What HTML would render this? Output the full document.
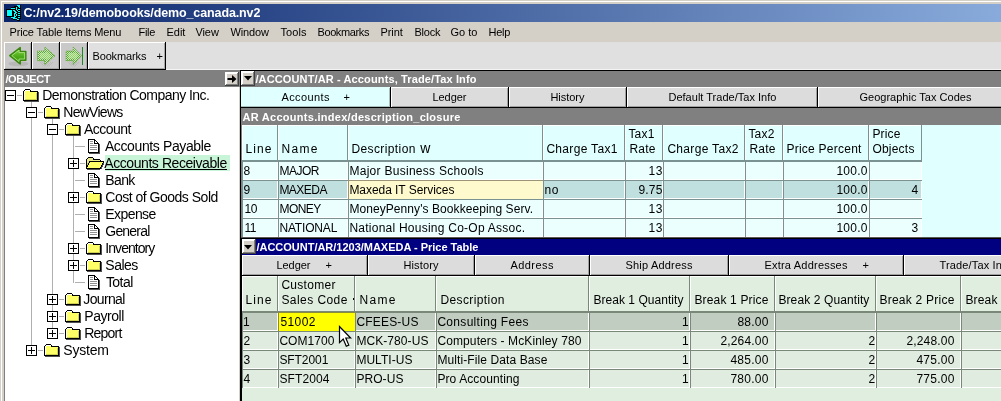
<!DOCTYPE html>
<html lang="en"><head><meta charset="utf-8"><title>C:/nv2.19/demobooks/demo_canada.nv2</title>
<style>
html,body{margin:0;padding:0;}
body{width:1001px;height:401px;overflow:hidden;background:#d4d0c8;}
#app{position:relative;width:1001px;height:401px;overflow:hidden;font-family:'Liberation Sans', sans-serif;color:#000;}
#app div,#app svg,#app span{position:absolute;}
#app span{white-space:pre;line-height:1;}
#app svg{overflow:visible;}
#txt{left:0;top:0;width:1001px;height:401px;will-change:transform;}
</style></head>
<body><div id="app">
<div style="left:0px;top:0px;width:1001px;height:401px;background:#d4d0c8;"></div>
<div style="left:1px;top:1px;width:1000px;height:1px;background:#ffffff;"></div>
<div style="left:1px;top:1px;width:1px;height:400px;background:#ffffff;"></div>
<div style="left:4px;top:4px;width:997px;height:18px;background:linear-gradient(90deg,#0a246a 0px,#89abdb 997px);"></div>
<div style="left:4px;top:42px;width:997px;height:27px;background:#e0e0e0;"></div>
<div style="left:166px;top:69px;width:835px;height:1px;background:#f4f4f4;"></div>
<div style="left:4px;top:42px;width:28px;height:28px;background:#c9c9c9;"></div>
<div style="left:4px;top:42px;width:27px;height:1px;background:#ffffff;"></div>
<div style="left:4px;top:42px;width:1px;height:27px;background:#ffffff;"></div>
<div style="left:30px;top:43px;width:1px;height:26px;background:#a8a8a8;"></div>
<div style="left:5px;top:68px;width:26px;height:1px;background:#a8a8a8;"></div>
<div style="left:31px;top:42px;width:1px;height:28px;background:#000000;"></div>
<div style="left:4px;top:69px;width:28px;height:1px;background:#000000;"></div>
<div style="left:32px;top:42px;width:28px;height:28px;background:#c9c9c9;"></div>
<div style="left:32px;top:42px;width:27px;height:1px;background:#ffffff;"></div>
<div style="left:32px;top:42px;width:1px;height:27px;background:#ffffff;"></div>
<div style="left:58px;top:43px;width:1px;height:26px;background:#a8a8a8;"></div>
<div style="left:33px;top:68px;width:26px;height:1px;background:#a8a8a8;"></div>
<div style="left:59px;top:42px;width:1px;height:28px;background:#000000;"></div>
<div style="left:32px;top:69px;width:28px;height:1px;background:#000000;"></div>
<div style="left:60px;top:42px;width:28px;height:28px;background:#c9c9c9;"></div>
<div style="left:60px;top:42px;width:27px;height:1px;background:#ffffff;"></div>
<div style="left:60px;top:42px;width:1px;height:27px;background:#ffffff;"></div>
<div style="left:86px;top:43px;width:1px;height:26px;background:#a8a8a8;"></div>
<div style="left:61px;top:68px;width:26px;height:1px;background:#a8a8a8;"></div>
<div style="left:87px;top:42px;width:1px;height:28px;background:#000000;"></div>
<div style="left:60px;top:69px;width:28px;height:1px;background:#000000;"></div>
<div style="left:88px;top:42px;width:78px;height:28px;background:#e0e0e0;"></div>
<div style="left:88px;top:42px;width:77px;height:1px;background:#ffffff;"></div>
<div style="left:88px;top:42px;width:1px;height:27px;background:#ffffff;"></div>
<div style="left:164px;top:43px;width:1px;height:26px;background:#a8a8a8;"></div>
<div style="left:89px;top:68px;width:76px;height:1px;background:#a8a8a8;"></div>
<div style="left:165px;top:42px;width:1px;height:28px;background:#000000;"></div>
<div style="left:88px;top:69px;width:78px;height:1px;background:#000000;"></div>
<svg style="left:4px;top:42px" width="28" height="28" viewBox="0 0 28 28">
<defs><linearGradient id="ga" x1="0" y1="0" x2="0" y2="1"><stop offset="0" stop-color="#8ad84a"/><stop offset=".55" stop-color="#4caa18"/><stop offset="1" stop-color="#3c960e"/></linearGradient></defs>
<ellipse cx="14.5" cy="21.8" rx="10" ry="2.4" fill="#909090" opacity=".3"/>
<path d="M5.8 13.6 L16.2 5.6 V9.4 H21.8 V18.2 H16.2 V22 Z" fill="url(#ga)" stroke="#3a860f" stroke-width="1.5" stroke-linejoin="round"/>
<path d="M7.8 13.6 L15 8.1 V10.6 H20.6 V17 H15 V19.5 Z" fill="none" stroke="#b4ea8e" stroke-width="0.9" stroke-linejoin="round" opacity=".85"/>
</svg>
<svg style="left:32px;top:42px" width="28" height="28" viewBox="0 0 28 28"><defs><pattern id="p32" width="2" height="2" patternUnits="userSpaceOnUse"><rect width="2" height="2" fill="#cfe6c2"/><rect width="1" height="1" fill="#5aa632"/><rect x="1" y="1" width="1" height="1" fill="#5aa632"/></pattern><pattern id="q32" width="2" height="2" patternUnits="userSpaceOnUse"><rect width="1" height="1" fill="#a0a0a0"/><rect x="1" y="1" width="1" height="1" fill="#a0a0a0"/></pattern></defs><path d="M7.5 20 H22 L17 24.5 H10.5 Z" fill="url(#q32)" opacity=".4"/><path d="M23 13.8 L12.7 5 V9 H5.5 V18.7 H12.7 V22.7 Z" fill="url(#p32)" stroke="#62aa3a" stroke-width="1" stroke-dasharray="1 1"/><path d="M19.5 13.8 L14.2 8.6 V11 H8.0 V16.6 H14.2 V19 Z" fill="#c4f0a2" opacity=".55"/></svg>
<svg style="left:60px;top:42px" width="28" height="28" viewBox="0 0 28 28"><defs><pattern id="p60" width="2" height="2" patternUnits="userSpaceOnUse"><rect width="2" height="2" fill="#cfe6c2"/><rect width="1" height="1" fill="#5aa632"/><rect x="1" y="1" width="1" height="1" fill="#5aa632"/></pattern><pattern id="q60" width="2" height="2" patternUnits="userSpaceOnUse"><rect width="1" height="1" fill="#a0a0a0"/><rect x="1" y="1" width="1" height="1" fill="#a0a0a0"/></pattern></defs><path d="M8 20 H20.5 L15.5 24.5 H11 Z" fill="url(#q60)" opacity=".4"/><path d="M21.5 13.8 L13.2 5 V9 H6 V18.7 H13.2 V22.7 Z" fill="url(#p60)" stroke="#62aa3a" stroke-width="1" stroke-dasharray="1 1"/><path d="M18.0 13.8 L14.7 8.6 V11 H8.5 V16.6 H14.7 V19 Z" fill="#c4f0a2" opacity=".55"/><rect x="22" y="5" width="1" height="18" fill="#1c8a1c" shape-rendering="crispEdges"/></svg>
<div style="left:4px;top:70px;width:236px;height:17px;background:#808080;"></div>
<div style="left:4px;top:87px;width:235px;height:314px;background:#ffffff;"></div>
<div style="left:4px;top:87px;width:1px;height:314px;background:#808080;"></div>
<div style="left:225px;top:72px;width:14px;height:14px;background:#d4d0c8;"></div>
<div style="left:225px;top:72px;width:13px;height:2px;background:#ffffff;"></div>
<div style="left:225px;top:72px;width:2px;height:13px;background:#ffffff;"></div>
<div style="left:237px;top:73px;width:1px;height:12px;background:#808080;"></div>
<div style="left:226px;top:84px;width:12px;height:1px;background:#808080;"></div>
<div style="left:238px;top:72px;width:1px;height:14px;background:#404040;"></div>
<div style="left:225px;top:85px;width:14px;height:1px;background:#404040;"></div>
<svg style="left:227px;top:74px" width="10" height="10" viewBox="0 0 10 10"><path d="M0.5 4 H5 V1 L9.5 5 L5 9 V6 H0.5 Z" fill="#000"/></svg>
<div style="left:31px;top:102px;width:1px;height:249px;background:#b0b0b0;"></div>
<div style="left:52px;top:119px;width:1px;height:215px;background:#b0b0b0;"></div>
<div style="left:73px;top:136px;width:1px;height:147px;background:#b0b0b0;"></div>
<div style="left:17px;top:95px;width:5px;height:1px;background:#b0b0b0;"></div>
<div style="left:5px;top:90px;width:11px;height:11px;background:#ffffff;border:1px solid #000;box-sizing:border-box;"></div>
<div style="left:7px;top:95px;width:7px;height:1px;background:#000;"></div>
<svg style="left:23px;top:89px" width="16" height="13" viewBox="0 0 16 13" shape-rendering="crispEdges"><rect x="2" y="0" width="5" height="1" fill="#000000"/><rect x="1" y="1" width="1" height="1" fill="#000000"/><rect x="2" y="1" width="5" height="1" fill="#ffffff"/><rect x="7" y="1" width="1" height="1" fill="#000000"/><rect x="0" y="2" width="1" height="1" fill="#000000"/><rect x="1" y="2" width="1" height="1" fill="#ffffff"/><rect x="2" y="2" width="5" height="1" fill="#ffff66"/><rect x="7" y="2" width="8" height="1" fill="#000000"/><rect x="0" y="3" width="1" height="1" fill="#000000"/><rect x="1" y="3" width="1" height="1" fill="#ffffff"/><rect x="2" y="3" width="12" height="1" fill="#ffff66"/><rect x="14" y="3" width="1" height="1" fill="#000000"/><rect x="15" y="3" width="1" height="1" fill="#505050"/><rect x="0" y="4" width="1" height="1" fill="#000000"/><rect x="1" y="4" width="1" height="1" fill="#ffffff"/><rect x="2" y="4" width="11" height="1" fill="#ffff66"/><rect x="13" y="4" width="1" height="1" fill="#d0d050"/><rect x="14" y="4" width="1" height="1" fill="#000000"/><rect x="15" y="4" width="1" height="1" fill="#505050"/><rect x="0" y="5" width="1" height="1" fill="#000000"/><rect x="1" y="5" width="1" height="1" fill="#ffffff"/><rect x="2" y="5" width="11" height="1" fill="#ffff66"/><rect x="13" y="5" width="1" height="1" fill="#d0d050"/><rect x="14" y="5" width="1" height="1" fill="#000000"/><rect x="15" y="5" width="1" height="1" fill="#505050"/><rect x="0" y="6" width="1" height="1" fill="#000000"/><rect x="1" y="6" width="1" height="1" fill="#ffffff"/><rect x="2" y="6" width="11" height="1" fill="#ffff66"/><rect x="13" y="6" width="1" height="1" fill="#d0d050"/><rect x="14" y="6" width="1" height="1" fill="#000000"/><rect x="15" y="6" width="1" height="1" fill="#505050"/><rect x="0" y="7" width="1" height="1" fill="#000000"/><rect x="1" y="7" width="1" height="1" fill="#ffffff"/><rect x="2" y="7" width="11" height="1" fill="#ffff66"/><rect x="13" y="7" width="1" height="1" fill="#d0d050"/><rect x="14" y="7" width="1" height="1" fill="#000000"/><rect x="15" y="7" width="1" height="1" fill="#505050"/><rect x="0" y="8" width="1" height="1" fill="#000000"/><rect x="1" y="8" width="1" height="1" fill="#ffffff"/><rect x="2" y="8" width="11" height="1" fill="#ffff66"/><rect x="13" y="8" width="1" height="1" fill="#d0d050"/><rect x="14" y="8" width="1" height="1" fill="#000000"/><rect x="15" y="8" width="1" height="1" fill="#505050"/><rect x="0" y="9" width="1" height="1" fill="#000000"/><rect x="1" y="9" width="1" height="1" fill="#ffffff"/><rect x="2" y="9" width="11" height="1" fill="#ffff66"/><rect x="13" y="9" width="1" height="1" fill="#d0d050"/><rect x="14" y="9" width="1" height="1" fill="#000000"/><rect x="15" y="9" width="1" height="1" fill="#505050"/><rect x="0" y="10" width="1" height="1" fill="#000000"/><rect x="1" y="10" width="1" height="1" fill="#ffffff"/><rect x="2" y="10" width="12" height="1" fill="#d0d050"/><rect x="14" y="10" width="1" height="1" fill="#000000"/><rect x="15" y="10" width="1" height="1" fill="#505050"/><rect x="0" y="11" width="15" height="1" fill="#000000"/><rect x="15" y="11" width="1" height="1" fill="#505050"/><rect x="1" y="12" width="15" height="1" fill="#505050"/></svg>
<div style="left:38px;top:112px;width:5px;height:1px;background:#b0b0b0;"></div>
<div style="left:26px;top:107px;width:11px;height:11px;background:#ffffff;border:1px solid #000;box-sizing:border-box;"></div>
<div style="left:28px;top:112px;width:7px;height:1px;background:#000;"></div>
<svg style="left:44px;top:106px" width="16" height="13" viewBox="0 0 16 13" shape-rendering="crispEdges"><rect x="2" y="0" width="5" height="1" fill="#000000"/><rect x="1" y="1" width="1" height="1" fill="#000000"/><rect x="2" y="1" width="5" height="1" fill="#ffffff"/><rect x="7" y="1" width="1" height="1" fill="#000000"/><rect x="0" y="2" width="1" height="1" fill="#000000"/><rect x="1" y="2" width="1" height="1" fill="#ffffff"/><rect x="2" y="2" width="5" height="1" fill="#ffff66"/><rect x="7" y="2" width="8" height="1" fill="#000000"/><rect x="0" y="3" width="1" height="1" fill="#000000"/><rect x="1" y="3" width="1" height="1" fill="#ffffff"/><rect x="2" y="3" width="12" height="1" fill="#ffff66"/><rect x="14" y="3" width="1" height="1" fill="#000000"/><rect x="15" y="3" width="1" height="1" fill="#505050"/><rect x="0" y="4" width="1" height="1" fill="#000000"/><rect x="1" y="4" width="1" height="1" fill="#ffffff"/><rect x="2" y="4" width="11" height="1" fill="#ffff66"/><rect x="13" y="4" width="1" height="1" fill="#d0d050"/><rect x="14" y="4" width="1" height="1" fill="#000000"/><rect x="15" y="4" width="1" height="1" fill="#505050"/><rect x="0" y="5" width="1" height="1" fill="#000000"/><rect x="1" y="5" width="1" height="1" fill="#ffffff"/><rect x="2" y="5" width="11" height="1" fill="#ffff66"/><rect x="13" y="5" width="1" height="1" fill="#d0d050"/><rect x="14" y="5" width="1" height="1" fill="#000000"/><rect x="15" y="5" width="1" height="1" fill="#505050"/><rect x="0" y="6" width="1" height="1" fill="#000000"/><rect x="1" y="6" width="1" height="1" fill="#ffffff"/><rect x="2" y="6" width="11" height="1" fill="#ffff66"/><rect x="13" y="6" width="1" height="1" fill="#d0d050"/><rect x="14" y="6" width="1" height="1" fill="#000000"/><rect x="15" y="6" width="1" height="1" fill="#505050"/><rect x="0" y="7" width="1" height="1" fill="#000000"/><rect x="1" y="7" width="1" height="1" fill="#ffffff"/><rect x="2" y="7" width="11" height="1" fill="#ffff66"/><rect x="13" y="7" width="1" height="1" fill="#d0d050"/><rect x="14" y="7" width="1" height="1" fill="#000000"/><rect x="15" y="7" width="1" height="1" fill="#505050"/><rect x="0" y="8" width="1" height="1" fill="#000000"/><rect x="1" y="8" width="1" height="1" fill="#ffffff"/><rect x="2" y="8" width="11" height="1" fill="#ffff66"/><rect x="13" y="8" width="1" height="1" fill="#d0d050"/><rect x="14" y="8" width="1" height="1" fill="#000000"/><rect x="15" y="8" width="1" height="1" fill="#505050"/><rect x="0" y="9" width="1" height="1" fill="#000000"/><rect x="1" y="9" width="1" height="1" fill="#ffffff"/><rect x="2" y="9" width="11" height="1" fill="#ffff66"/><rect x="13" y="9" width="1" height="1" fill="#d0d050"/><rect x="14" y="9" width="1" height="1" fill="#000000"/><rect x="15" y="9" width="1" height="1" fill="#505050"/><rect x="0" y="10" width="1" height="1" fill="#000000"/><rect x="1" y="10" width="1" height="1" fill="#ffffff"/><rect x="2" y="10" width="12" height="1" fill="#d0d050"/><rect x="14" y="10" width="1" height="1" fill="#000000"/><rect x="15" y="10" width="1" height="1" fill="#505050"/><rect x="0" y="11" width="15" height="1" fill="#000000"/><rect x="15" y="11" width="1" height="1" fill="#505050"/><rect x="1" y="12" width="15" height="1" fill="#505050"/></svg>
<div style="left:59px;top:129px;width:5px;height:1px;background:#b0b0b0;"></div>
<div style="left:47px;top:124px;width:11px;height:11px;background:#ffffff;border:1px solid #000;box-sizing:border-box;"></div>
<div style="left:49px;top:129px;width:7px;height:1px;background:#000;"></div>
<svg style="left:65px;top:123px" width="16" height="13" viewBox="0 0 16 13" shape-rendering="crispEdges"><rect x="2" y="0" width="5" height="1" fill="#000000"/><rect x="1" y="1" width="1" height="1" fill="#000000"/><rect x="2" y="1" width="5" height="1" fill="#ffffff"/><rect x="7" y="1" width="1" height="1" fill="#000000"/><rect x="0" y="2" width="1" height="1" fill="#000000"/><rect x="1" y="2" width="1" height="1" fill="#ffffff"/><rect x="2" y="2" width="5" height="1" fill="#ffff66"/><rect x="7" y="2" width="8" height="1" fill="#000000"/><rect x="0" y="3" width="1" height="1" fill="#000000"/><rect x="1" y="3" width="1" height="1" fill="#ffffff"/><rect x="2" y="3" width="12" height="1" fill="#ffff66"/><rect x="14" y="3" width="1" height="1" fill="#000000"/><rect x="15" y="3" width="1" height="1" fill="#505050"/><rect x="0" y="4" width="1" height="1" fill="#000000"/><rect x="1" y="4" width="1" height="1" fill="#ffffff"/><rect x="2" y="4" width="11" height="1" fill="#ffff66"/><rect x="13" y="4" width="1" height="1" fill="#d0d050"/><rect x="14" y="4" width="1" height="1" fill="#000000"/><rect x="15" y="4" width="1" height="1" fill="#505050"/><rect x="0" y="5" width="1" height="1" fill="#000000"/><rect x="1" y="5" width="1" height="1" fill="#ffffff"/><rect x="2" y="5" width="11" height="1" fill="#ffff66"/><rect x="13" y="5" width="1" height="1" fill="#d0d050"/><rect x="14" y="5" width="1" height="1" fill="#000000"/><rect x="15" y="5" width="1" height="1" fill="#505050"/><rect x="0" y="6" width="1" height="1" fill="#000000"/><rect x="1" y="6" width="1" height="1" fill="#ffffff"/><rect x="2" y="6" width="11" height="1" fill="#ffff66"/><rect x="13" y="6" width="1" height="1" fill="#d0d050"/><rect x="14" y="6" width="1" height="1" fill="#000000"/><rect x="15" y="6" width="1" height="1" fill="#505050"/><rect x="0" y="7" width="1" height="1" fill="#000000"/><rect x="1" y="7" width="1" height="1" fill="#ffffff"/><rect x="2" y="7" width="11" height="1" fill="#ffff66"/><rect x="13" y="7" width="1" height="1" fill="#d0d050"/><rect x="14" y="7" width="1" height="1" fill="#000000"/><rect x="15" y="7" width="1" height="1" fill="#505050"/><rect x="0" y="8" width="1" height="1" fill="#000000"/><rect x="1" y="8" width="1" height="1" fill="#ffffff"/><rect x="2" y="8" width="11" height="1" fill="#ffff66"/><rect x="13" y="8" width="1" height="1" fill="#d0d050"/><rect x="14" y="8" width="1" height="1" fill="#000000"/><rect x="15" y="8" width="1" height="1" fill="#505050"/><rect x="0" y="9" width="1" height="1" fill="#000000"/><rect x="1" y="9" width="1" height="1" fill="#ffffff"/><rect x="2" y="9" width="11" height="1" fill="#ffff66"/><rect x="13" y="9" width="1" height="1" fill="#d0d050"/><rect x="14" y="9" width="1" height="1" fill="#000000"/><rect x="15" y="9" width="1" height="1" fill="#505050"/><rect x="0" y="10" width="1" height="1" fill="#000000"/><rect x="1" y="10" width="1" height="1" fill="#ffffff"/><rect x="2" y="10" width="12" height="1" fill="#d0d050"/><rect x="14" y="10" width="1" height="1" fill="#000000"/><rect x="15" y="10" width="1" height="1" fill="#505050"/><rect x="0" y="11" width="15" height="1" fill="#000000"/><rect x="15" y="11" width="1" height="1" fill="#505050"/><rect x="1" y="12" width="15" height="1" fill="#505050"/></svg>
<div style="left:75px;top:146px;width:10px;height:1px;background:#b0b0b0;"></div>
<svg style="left:88px;top:139px" width="12" height="15" viewBox="0 0 12 15" shape-rendering="crispEdges"><rect x="0" y="0" width="7" height="1" fill="#000000"/><rect x="0" y="1" width="1" height="1" fill="#000000"/><rect x="1" y="1" width="5" height="1" fill="#ffffff"/><rect x="6" y="1" width="2" height="1" fill="#000000"/><rect x="0" y="2" width="1" height="1" fill="#000000"/><rect x="1" y="2" width="1" height="1" fill="#ffffff"/><rect x="2" y="2" width="3" height="1" fill="#909090"/><rect x="5" y="2" width="1" height="1" fill="#ffffff"/><rect x="6" y="2" width="1" height="1" fill="#000000"/><rect x="7" y="2" width="1" height="1" fill="#ffffff"/><rect x="8" y="2" width="1" height="1" fill="#000000"/><rect x="0" y="3" width="1" height="1" fill="#000000"/><rect x="1" y="3" width="5" height="1" fill="#ffffff"/><rect x="6" y="3" width="1" height="1" fill="#000000"/><rect x="7" y="3" width="2" height="1" fill="#ffffff"/><rect x="9" y="3" width="1" height="1" fill="#000000"/><rect x="0" y="4" width="1" height="1" fill="#000000"/><rect x="1" y="4" width="1" height="1" fill="#ffffff"/><rect x="2" y="4" width="3" height="1" fill="#909090"/><rect x="5" y="4" width="1" height="1" fill="#ffffff"/><rect x="6" y="4" width="5" height="1" fill="#000000"/><rect x="0" y="5" width="1" height="1" fill="#000000"/><rect x="1" y="5" width="9" height="1" fill="#ffffff"/><rect x="10" y="5" width="1" height="1" fill="#000000"/><rect x="11" y="5" width="1" height="1" fill="#505050"/><rect x="0" y="6" width="1" height="1" fill="#000000"/><rect x="1" y="6" width="1" height="1" fill="#ffffff"/><rect x="2" y="6" width="7" height="1" fill="#909090"/><rect x="9" y="6" width="1" height="1" fill="#ffffff"/><rect x="10" y="6" width="1" height="1" fill="#000000"/><rect x="11" y="6" width="1" height="1" fill="#505050"/><rect x="0" y="7" width="1" height="1" fill="#000000"/><rect x="1" y="7" width="9" height="1" fill="#ffffff"/><rect x="10" y="7" width="1" height="1" fill="#000000"/><rect x="11" y="7" width="1" height="1" fill="#505050"/><rect x="0" y="8" width="1" height="1" fill="#000000"/><rect x="1" y="8" width="1" height="1" fill="#ffffff"/><rect x="2" y="8" width="7" height="1" fill="#909090"/><rect x="9" y="8" width="1" height="1" fill="#ffffff"/><rect x="10" y="8" width="1" height="1" fill="#000000"/><rect x="11" y="8" width="1" height="1" fill="#505050"/><rect x="0" y="9" width="1" height="1" fill="#000000"/><rect x="1" y="9" width="9" height="1" fill="#ffffff"/><rect x="10" y="9" width="1" height="1" fill="#000000"/><rect x="11" y="9" width="1" height="1" fill="#505050"/><rect x="0" y="10" width="1" height="1" fill="#000000"/><rect x="1" y="10" width="1" height="1" fill="#ffffff"/><rect x="2" y="10" width="7" height="1" fill="#909090"/><rect x="9" y="10" width="1" height="1" fill="#ffffff"/><rect x="10" y="10" width="1" height="1" fill="#000000"/><rect x="11" y="10" width="1" height="1" fill="#505050"/><rect x="0" y="11" width="1" height="1" fill="#000000"/><rect x="1" y="11" width="9" height="1" fill="#ffffff"/><rect x="10" y="11" width="1" height="1" fill="#000000"/><rect x="11" y="11" width="1" height="1" fill="#505050"/><rect x="0" y="12" width="1" height="1" fill="#000000"/><rect x="1" y="12" width="9" height="1" fill="#ffffff"/><rect x="10" y="12" width="1" height="1" fill="#000000"/><rect x="11" y="12" width="1" height="1" fill="#505050"/><rect x="0" y="13" width="11" height="1" fill="#000000"/><rect x="11" y="13" width="1" height="1" fill="#505050"/><rect x="1" y="14" width="11" height="1" fill="#505050"/></svg>
<div style="left:80px;top:163px;width:5px;height:1px;background:#b0b0b0;"></div>
<div style="left:68px;top:158px;width:11px;height:11px;background:#ffffff;border:1px solid #000;box-sizing:border-box;"></div>
<div style="left:70px;top:163px;width:7px;height:1px;background:#000;"></div>
<div style="left:73px;top:160px;width:1px;height:7px;background:#000;"></div>
<svg style="left:86px;top:157px" width="18" height="13" viewBox="0 0 18 13" shape-rendering="crispEdges"><rect x="2" y="0" width="5" height="1" fill="#000000"/><rect x="1" y="1" width="1" height="1" fill="#000000"/><rect x="2" y="1" width="5" height="1" fill="#e8e88c"/><rect x="7" y="1" width="1" height="1" fill="#000000"/><rect x="0" y="2" width="1" height="1" fill="#000000"/><rect x="1" y="2" width="6" height="1" fill="#e8e88c"/><rect x="7" y="2" width="7" height="1" fill="#000000"/><rect x="0" y="3" width="1" height="1" fill="#000000"/><rect x="1" y="3" width="13" height="1" fill="#e8e88c"/><rect x="14" y="3" width="1" height="1" fill="#000000"/><rect x="0" y="4" width="1" height="1" fill="#000000"/><rect x="1" y="4" width="2" height="1" fill="#e8e88c"/><rect x="3" y="4" width="15" height="1" fill="#000000"/><rect x="0" y="5" width="1" height="1" fill="#000000"/><rect x="1" y="5" width="1" height="1" fill="#e8e88c"/><rect x="2" y="5" width="1" height="1" fill="#d0d050"/><rect x="3" y="5" width="1" height="1" fill="#000000"/><rect x="4" y="5" width="13" height="1" fill="#ffff66"/><rect x="17" y="5" width="1" height="1" fill="#000000"/><rect x="0" y="6" width="1" height="1" fill="#000000"/><rect x="1" y="6" width="1" height="1" fill="#d0d050"/><rect x="2" y="6" width="1" height="1" fill="#000000"/><rect x="3" y="6" width="13" height="1" fill="#ffff66"/><rect x="16" y="6" width="1" height="1" fill="#000000"/><rect x="17" y="6" width="1" height="1" fill="#505050"/><rect x="0" y="7" width="1" height="1" fill="#000000"/><rect x="1" y="7" width="1" height="1" fill="#d0d050"/><rect x="2" y="7" width="1" height="1" fill="#000000"/><rect x="3" y="7" width="13" height="1" fill="#ffff66"/><rect x="16" y="7" width="1" height="1" fill="#000000"/><rect x="17" y="7" width="1" height="1" fill="#505050"/><rect x="0" y="8" width="2" height="1" fill="#000000"/><rect x="2" y="8" width="13" height="1" fill="#ffff66"/><rect x="15" y="8" width="1" height="1" fill="#000000"/><rect x="16" y="8" width="1" height="1" fill="#505050"/><rect x="0" y="9" width="2" height="1" fill="#000000"/><rect x="2" y="9" width="13" height="1" fill="#ffff66"/><rect x="15" y="9" width="1" height="1" fill="#000000"/><rect x="16" y="9" width="1" height="1" fill="#505050"/><rect x="0" y="10" width="1" height="1" fill="#000000"/><rect x="1" y="10" width="13" height="1" fill="#ffff66"/><rect x="14" y="10" width="1" height="1" fill="#000000"/><rect x="15" y="10" width="1" height="1" fill="#505050"/><rect x="0" y="11" width="15" height="1" fill="#000000"/><rect x="15" y="11" width="1" height="1" fill="#505050"/><rect x="1" y="12" width="13" height="1" fill="#505050"/></svg>
<div style="left:105px;top:155px;width:125px;height:16px;background:#c8f4d8;"></div>
<div style="left:105px;top:169px;width:122px;height:1px;background:#000;"></div>
<div style="left:75px;top:180px;width:10px;height:1px;background:#b0b0b0;"></div>
<svg style="left:88px;top:173px" width="12" height="15" viewBox="0 0 12 15" shape-rendering="crispEdges"><rect x="0" y="0" width="7" height="1" fill="#000000"/><rect x="0" y="1" width="1" height="1" fill="#000000"/><rect x="1" y="1" width="5" height="1" fill="#ffffff"/><rect x="6" y="1" width="2" height="1" fill="#000000"/><rect x="0" y="2" width="1" height="1" fill="#000000"/><rect x="1" y="2" width="1" height="1" fill="#ffffff"/><rect x="2" y="2" width="3" height="1" fill="#909090"/><rect x="5" y="2" width="1" height="1" fill="#ffffff"/><rect x="6" y="2" width="1" height="1" fill="#000000"/><rect x="7" y="2" width="1" height="1" fill="#ffffff"/><rect x="8" y="2" width="1" height="1" fill="#000000"/><rect x="0" y="3" width="1" height="1" fill="#000000"/><rect x="1" y="3" width="5" height="1" fill="#ffffff"/><rect x="6" y="3" width="1" height="1" fill="#000000"/><rect x="7" y="3" width="2" height="1" fill="#ffffff"/><rect x="9" y="3" width="1" height="1" fill="#000000"/><rect x="0" y="4" width="1" height="1" fill="#000000"/><rect x="1" y="4" width="1" height="1" fill="#ffffff"/><rect x="2" y="4" width="3" height="1" fill="#909090"/><rect x="5" y="4" width="1" height="1" fill="#ffffff"/><rect x="6" y="4" width="5" height="1" fill="#000000"/><rect x="0" y="5" width="1" height="1" fill="#000000"/><rect x="1" y="5" width="9" height="1" fill="#ffffff"/><rect x="10" y="5" width="1" height="1" fill="#000000"/><rect x="11" y="5" width="1" height="1" fill="#505050"/><rect x="0" y="6" width="1" height="1" fill="#000000"/><rect x="1" y="6" width="1" height="1" fill="#ffffff"/><rect x="2" y="6" width="7" height="1" fill="#909090"/><rect x="9" y="6" width="1" height="1" fill="#ffffff"/><rect x="10" y="6" width="1" height="1" fill="#000000"/><rect x="11" y="6" width="1" height="1" fill="#505050"/><rect x="0" y="7" width="1" height="1" fill="#000000"/><rect x="1" y="7" width="9" height="1" fill="#ffffff"/><rect x="10" y="7" width="1" height="1" fill="#000000"/><rect x="11" y="7" width="1" height="1" fill="#505050"/><rect x="0" y="8" width="1" height="1" fill="#000000"/><rect x="1" y="8" width="1" height="1" fill="#ffffff"/><rect x="2" y="8" width="7" height="1" fill="#909090"/><rect x="9" y="8" width="1" height="1" fill="#ffffff"/><rect x="10" y="8" width="1" height="1" fill="#000000"/><rect x="11" y="8" width="1" height="1" fill="#505050"/><rect x="0" y="9" width="1" height="1" fill="#000000"/><rect x="1" y="9" width="9" height="1" fill="#ffffff"/><rect x="10" y="9" width="1" height="1" fill="#000000"/><rect x="11" y="9" width="1" height="1" fill="#505050"/><rect x="0" y="10" width="1" height="1" fill="#000000"/><rect x="1" y="10" width="1" height="1" fill="#ffffff"/><rect x="2" y="10" width="7" height="1" fill="#909090"/><rect x="9" y="10" width="1" height="1" fill="#ffffff"/><rect x="10" y="10" width="1" height="1" fill="#000000"/><rect x="11" y="10" width="1" height="1" fill="#505050"/><rect x="0" y="11" width="1" height="1" fill="#000000"/><rect x="1" y="11" width="9" height="1" fill="#ffffff"/><rect x="10" y="11" width="1" height="1" fill="#000000"/><rect x="11" y="11" width="1" height="1" fill="#505050"/><rect x="0" y="12" width="1" height="1" fill="#000000"/><rect x="1" y="12" width="9" height="1" fill="#ffffff"/><rect x="10" y="12" width="1" height="1" fill="#000000"/><rect x="11" y="12" width="1" height="1" fill="#505050"/><rect x="0" y="13" width="11" height="1" fill="#000000"/><rect x="11" y="13" width="1" height="1" fill="#505050"/><rect x="1" y="14" width="11" height="1" fill="#505050"/></svg>
<div style="left:80px;top:197px;width:5px;height:1px;background:#b0b0b0;"></div>
<div style="left:68px;top:192px;width:11px;height:11px;background:#ffffff;border:1px solid #000;box-sizing:border-box;"></div>
<div style="left:70px;top:197px;width:7px;height:1px;background:#000;"></div>
<div style="left:73px;top:194px;width:1px;height:7px;background:#000;"></div>
<svg style="left:86px;top:191px" width="16" height="13" viewBox="0 0 16 13" shape-rendering="crispEdges"><rect x="2" y="0" width="5" height="1" fill="#000000"/><rect x="1" y="1" width="1" height="1" fill="#000000"/><rect x="2" y="1" width="5" height="1" fill="#ffffff"/><rect x="7" y="1" width="1" height="1" fill="#000000"/><rect x="0" y="2" width="1" height="1" fill="#000000"/><rect x="1" y="2" width="1" height="1" fill="#ffffff"/><rect x="2" y="2" width="5" height="1" fill="#ffff66"/><rect x="7" y="2" width="8" height="1" fill="#000000"/><rect x="0" y="3" width="1" height="1" fill="#000000"/><rect x="1" y="3" width="1" height="1" fill="#ffffff"/><rect x="2" y="3" width="12" height="1" fill="#ffff66"/><rect x="14" y="3" width="1" height="1" fill="#000000"/><rect x="15" y="3" width="1" height="1" fill="#505050"/><rect x="0" y="4" width="1" height="1" fill="#000000"/><rect x="1" y="4" width="1" height="1" fill="#ffffff"/><rect x="2" y="4" width="11" height="1" fill="#ffff66"/><rect x="13" y="4" width="1" height="1" fill="#d0d050"/><rect x="14" y="4" width="1" height="1" fill="#000000"/><rect x="15" y="4" width="1" height="1" fill="#505050"/><rect x="0" y="5" width="1" height="1" fill="#000000"/><rect x="1" y="5" width="1" height="1" fill="#ffffff"/><rect x="2" y="5" width="11" height="1" fill="#ffff66"/><rect x="13" y="5" width="1" height="1" fill="#d0d050"/><rect x="14" y="5" width="1" height="1" fill="#000000"/><rect x="15" y="5" width="1" height="1" fill="#505050"/><rect x="0" y="6" width="1" height="1" fill="#000000"/><rect x="1" y="6" width="1" height="1" fill="#ffffff"/><rect x="2" y="6" width="11" height="1" fill="#ffff66"/><rect x="13" y="6" width="1" height="1" fill="#d0d050"/><rect x="14" y="6" width="1" height="1" fill="#000000"/><rect x="15" y="6" width="1" height="1" fill="#505050"/><rect x="0" y="7" width="1" height="1" fill="#000000"/><rect x="1" y="7" width="1" height="1" fill="#ffffff"/><rect x="2" y="7" width="11" height="1" fill="#ffff66"/><rect x="13" y="7" width="1" height="1" fill="#d0d050"/><rect x="14" y="7" width="1" height="1" fill="#000000"/><rect x="15" y="7" width="1" height="1" fill="#505050"/><rect x="0" y="8" width="1" height="1" fill="#000000"/><rect x="1" y="8" width="1" height="1" fill="#ffffff"/><rect x="2" y="8" width="11" height="1" fill="#ffff66"/><rect x="13" y="8" width="1" height="1" fill="#d0d050"/><rect x="14" y="8" width="1" height="1" fill="#000000"/><rect x="15" y="8" width="1" height="1" fill="#505050"/><rect x="0" y="9" width="1" height="1" fill="#000000"/><rect x="1" y="9" width="1" height="1" fill="#ffffff"/><rect x="2" y="9" width="11" height="1" fill="#ffff66"/><rect x="13" y="9" width="1" height="1" fill="#d0d050"/><rect x="14" y="9" width="1" height="1" fill="#000000"/><rect x="15" y="9" width="1" height="1" fill="#505050"/><rect x="0" y="10" width="1" height="1" fill="#000000"/><rect x="1" y="10" width="1" height="1" fill="#ffffff"/><rect x="2" y="10" width="12" height="1" fill="#d0d050"/><rect x="14" y="10" width="1" height="1" fill="#000000"/><rect x="15" y="10" width="1" height="1" fill="#505050"/><rect x="0" y="11" width="15" height="1" fill="#000000"/><rect x="15" y="11" width="1" height="1" fill="#505050"/><rect x="1" y="12" width="15" height="1" fill="#505050"/></svg>
<div style="left:75px;top:214px;width:10px;height:1px;background:#b0b0b0;"></div>
<svg style="left:88px;top:207px" width="12" height="15" viewBox="0 0 12 15" shape-rendering="crispEdges"><rect x="0" y="0" width="7" height="1" fill="#000000"/><rect x="0" y="1" width="1" height="1" fill="#000000"/><rect x="1" y="1" width="5" height="1" fill="#ffffff"/><rect x="6" y="1" width="2" height="1" fill="#000000"/><rect x="0" y="2" width="1" height="1" fill="#000000"/><rect x="1" y="2" width="1" height="1" fill="#ffffff"/><rect x="2" y="2" width="3" height="1" fill="#909090"/><rect x="5" y="2" width="1" height="1" fill="#ffffff"/><rect x="6" y="2" width="1" height="1" fill="#000000"/><rect x="7" y="2" width="1" height="1" fill="#ffffff"/><rect x="8" y="2" width="1" height="1" fill="#000000"/><rect x="0" y="3" width="1" height="1" fill="#000000"/><rect x="1" y="3" width="5" height="1" fill="#ffffff"/><rect x="6" y="3" width="1" height="1" fill="#000000"/><rect x="7" y="3" width="2" height="1" fill="#ffffff"/><rect x="9" y="3" width="1" height="1" fill="#000000"/><rect x="0" y="4" width="1" height="1" fill="#000000"/><rect x="1" y="4" width="1" height="1" fill="#ffffff"/><rect x="2" y="4" width="3" height="1" fill="#909090"/><rect x="5" y="4" width="1" height="1" fill="#ffffff"/><rect x="6" y="4" width="5" height="1" fill="#000000"/><rect x="0" y="5" width="1" height="1" fill="#000000"/><rect x="1" y="5" width="9" height="1" fill="#ffffff"/><rect x="10" y="5" width="1" height="1" fill="#000000"/><rect x="11" y="5" width="1" height="1" fill="#505050"/><rect x="0" y="6" width="1" height="1" fill="#000000"/><rect x="1" y="6" width="1" height="1" fill="#ffffff"/><rect x="2" y="6" width="7" height="1" fill="#909090"/><rect x="9" y="6" width="1" height="1" fill="#ffffff"/><rect x="10" y="6" width="1" height="1" fill="#000000"/><rect x="11" y="6" width="1" height="1" fill="#505050"/><rect x="0" y="7" width="1" height="1" fill="#000000"/><rect x="1" y="7" width="9" height="1" fill="#ffffff"/><rect x="10" y="7" width="1" height="1" fill="#000000"/><rect x="11" y="7" width="1" height="1" fill="#505050"/><rect x="0" y="8" width="1" height="1" fill="#000000"/><rect x="1" y="8" width="1" height="1" fill="#ffffff"/><rect x="2" y="8" width="7" height="1" fill="#909090"/><rect x="9" y="8" width="1" height="1" fill="#ffffff"/><rect x="10" y="8" width="1" height="1" fill="#000000"/><rect x="11" y="8" width="1" height="1" fill="#505050"/><rect x="0" y="9" width="1" height="1" fill="#000000"/><rect x="1" y="9" width="9" height="1" fill="#ffffff"/><rect x="10" y="9" width="1" height="1" fill="#000000"/><rect x="11" y="9" width="1" height="1" fill="#505050"/><rect x="0" y="10" width="1" height="1" fill="#000000"/><rect x="1" y="10" width="1" height="1" fill="#ffffff"/><rect x="2" y="10" width="7" height="1" fill="#909090"/><rect x="9" y="10" width="1" height="1" fill="#ffffff"/><rect x="10" y="10" width="1" height="1" fill="#000000"/><rect x="11" y="10" width="1" height="1" fill="#505050"/><rect x="0" y="11" width="1" height="1" fill="#000000"/><rect x="1" y="11" width="9" height="1" fill="#ffffff"/><rect x="10" y="11" width="1" height="1" fill="#000000"/><rect x="11" y="11" width="1" height="1" fill="#505050"/><rect x="0" y="12" width="1" height="1" fill="#000000"/><rect x="1" y="12" width="9" height="1" fill="#ffffff"/><rect x="10" y="12" width="1" height="1" fill="#000000"/><rect x="11" y="12" width="1" height="1" fill="#505050"/><rect x="0" y="13" width="11" height="1" fill="#000000"/><rect x="11" y="13" width="1" height="1" fill="#505050"/><rect x="1" y="14" width="11" height="1" fill="#505050"/></svg>
<div style="left:75px;top:231px;width:10px;height:1px;background:#b0b0b0;"></div>
<svg style="left:88px;top:224px" width="12" height="15" viewBox="0 0 12 15" shape-rendering="crispEdges"><rect x="0" y="0" width="7" height="1" fill="#000000"/><rect x="0" y="1" width="1" height="1" fill="#000000"/><rect x="1" y="1" width="5" height="1" fill="#ffffff"/><rect x="6" y="1" width="2" height="1" fill="#000000"/><rect x="0" y="2" width="1" height="1" fill="#000000"/><rect x="1" y="2" width="1" height="1" fill="#ffffff"/><rect x="2" y="2" width="3" height="1" fill="#909090"/><rect x="5" y="2" width="1" height="1" fill="#ffffff"/><rect x="6" y="2" width="1" height="1" fill="#000000"/><rect x="7" y="2" width="1" height="1" fill="#ffffff"/><rect x="8" y="2" width="1" height="1" fill="#000000"/><rect x="0" y="3" width="1" height="1" fill="#000000"/><rect x="1" y="3" width="5" height="1" fill="#ffffff"/><rect x="6" y="3" width="1" height="1" fill="#000000"/><rect x="7" y="3" width="2" height="1" fill="#ffffff"/><rect x="9" y="3" width="1" height="1" fill="#000000"/><rect x="0" y="4" width="1" height="1" fill="#000000"/><rect x="1" y="4" width="1" height="1" fill="#ffffff"/><rect x="2" y="4" width="3" height="1" fill="#909090"/><rect x="5" y="4" width="1" height="1" fill="#ffffff"/><rect x="6" y="4" width="5" height="1" fill="#000000"/><rect x="0" y="5" width="1" height="1" fill="#000000"/><rect x="1" y="5" width="9" height="1" fill="#ffffff"/><rect x="10" y="5" width="1" height="1" fill="#000000"/><rect x="11" y="5" width="1" height="1" fill="#505050"/><rect x="0" y="6" width="1" height="1" fill="#000000"/><rect x="1" y="6" width="1" height="1" fill="#ffffff"/><rect x="2" y="6" width="7" height="1" fill="#909090"/><rect x="9" y="6" width="1" height="1" fill="#ffffff"/><rect x="10" y="6" width="1" height="1" fill="#000000"/><rect x="11" y="6" width="1" height="1" fill="#505050"/><rect x="0" y="7" width="1" height="1" fill="#000000"/><rect x="1" y="7" width="9" height="1" fill="#ffffff"/><rect x="10" y="7" width="1" height="1" fill="#000000"/><rect x="11" y="7" width="1" height="1" fill="#505050"/><rect x="0" y="8" width="1" height="1" fill="#000000"/><rect x="1" y="8" width="1" height="1" fill="#ffffff"/><rect x="2" y="8" width="7" height="1" fill="#909090"/><rect x="9" y="8" width="1" height="1" fill="#ffffff"/><rect x="10" y="8" width="1" height="1" fill="#000000"/><rect x="11" y="8" width="1" height="1" fill="#505050"/><rect x="0" y="9" width="1" height="1" fill="#000000"/><rect x="1" y="9" width="9" height="1" fill="#ffffff"/><rect x="10" y="9" width="1" height="1" fill="#000000"/><rect x="11" y="9" width="1" height="1" fill="#505050"/><rect x="0" y="10" width="1" height="1" fill="#000000"/><rect x="1" y="10" width="1" height="1" fill="#ffffff"/><rect x="2" y="10" width="7" height="1" fill="#909090"/><rect x="9" y="10" width="1" height="1" fill="#ffffff"/><rect x="10" y="10" width="1" height="1" fill="#000000"/><rect x="11" y="10" width="1" height="1" fill="#505050"/><rect x="0" y="11" width="1" height="1" fill="#000000"/><rect x="1" y="11" width="9" height="1" fill="#ffffff"/><rect x="10" y="11" width="1" height="1" fill="#000000"/><rect x="11" y="11" width="1" height="1" fill="#505050"/><rect x="0" y="12" width="1" height="1" fill="#000000"/><rect x="1" y="12" width="9" height="1" fill="#ffffff"/><rect x="10" y="12" width="1" height="1" fill="#000000"/><rect x="11" y="12" width="1" height="1" fill="#505050"/><rect x="0" y="13" width="11" height="1" fill="#000000"/><rect x="11" y="13" width="1" height="1" fill="#505050"/><rect x="1" y="14" width="11" height="1" fill="#505050"/></svg>
<div style="left:80px;top:248px;width:5px;height:1px;background:#b0b0b0;"></div>
<div style="left:68px;top:243px;width:11px;height:11px;background:#ffffff;border:1px solid #000;box-sizing:border-box;"></div>
<div style="left:70px;top:248px;width:7px;height:1px;background:#000;"></div>
<div style="left:73px;top:245px;width:1px;height:7px;background:#000;"></div>
<svg style="left:86px;top:242px" width="16" height="13" viewBox="0 0 16 13" shape-rendering="crispEdges"><rect x="2" y="0" width="5" height="1" fill="#000000"/><rect x="1" y="1" width="1" height="1" fill="#000000"/><rect x="2" y="1" width="5" height="1" fill="#ffffff"/><rect x="7" y="1" width="1" height="1" fill="#000000"/><rect x="0" y="2" width="1" height="1" fill="#000000"/><rect x="1" y="2" width="1" height="1" fill="#ffffff"/><rect x="2" y="2" width="5" height="1" fill="#ffff66"/><rect x="7" y="2" width="8" height="1" fill="#000000"/><rect x="0" y="3" width="1" height="1" fill="#000000"/><rect x="1" y="3" width="1" height="1" fill="#ffffff"/><rect x="2" y="3" width="12" height="1" fill="#ffff66"/><rect x="14" y="3" width="1" height="1" fill="#000000"/><rect x="15" y="3" width="1" height="1" fill="#505050"/><rect x="0" y="4" width="1" height="1" fill="#000000"/><rect x="1" y="4" width="1" height="1" fill="#ffffff"/><rect x="2" y="4" width="11" height="1" fill="#ffff66"/><rect x="13" y="4" width="1" height="1" fill="#d0d050"/><rect x="14" y="4" width="1" height="1" fill="#000000"/><rect x="15" y="4" width="1" height="1" fill="#505050"/><rect x="0" y="5" width="1" height="1" fill="#000000"/><rect x="1" y="5" width="1" height="1" fill="#ffffff"/><rect x="2" y="5" width="11" height="1" fill="#ffff66"/><rect x="13" y="5" width="1" height="1" fill="#d0d050"/><rect x="14" y="5" width="1" height="1" fill="#000000"/><rect x="15" y="5" width="1" height="1" fill="#505050"/><rect x="0" y="6" width="1" height="1" fill="#000000"/><rect x="1" y="6" width="1" height="1" fill="#ffffff"/><rect x="2" y="6" width="11" height="1" fill="#ffff66"/><rect x="13" y="6" width="1" height="1" fill="#d0d050"/><rect x="14" y="6" width="1" height="1" fill="#000000"/><rect x="15" y="6" width="1" height="1" fill="#505050"/><rect x="0" y="7" width="1" height="1" fill="#000000"/><rect x="1" y="7" width="1" height="1" fill="#ffffff"/><rect x="2" y="7" width="11" height="1" fill="#ffff66"/><rect x="13" y="7" width="1" height="1" fill="#d0d050"/><rect x="14" y="7" width="1" height="1" fill="#000000"/><rect x="15" y="7" width="1" height="1" fill="#505050"/><rect x="0" y="8" width="1" height="1" fill="#000000"/><rect x="1" y="8" width="1" height="1" fill="#ffffff"/><rect x="2" y="8" width="11" height="1" fill="#ffff66"/><rect x="13" y="8" width="1" height="1" fill="#d0d050"/><rect x="14" y="8" width="1" height="1" fill="#000000"/><rect x="15" y="8" width="1" height="1" fill="#505050"/><rect x="0" y="9" width="1" height="1" fill="#000000"/><rect x="1" y="9" width="1" height="1" fill="#ffffff"/><rect x="2" y="9" width="11" height="1" fill="#ffff66"/><rect x="13" y="9" width="1" height="1" fill="#d0d050"/><rect x="14" y="9" width="1" height="1" fill="#000000"/><rect x="15" y="9" width="1" height="1" fill="#505050"/><rect x="0" y="10" width="1" height="1" fill="#000000"/><rect x="1" y="10" width="1" height="1" fill="#ffffff"/><rect x="2" y="10" width="12" height="1" fill="#d0d050"/><rect x="14" y="10" width="1" height="1" fill="#000000"/><rect x="15" y="10" width="1" height="1" fill="#505050"/><rect x="0" y="11" width="15" height="1" fill="#000000"/><rect x="15" y="11" width="1" height="1" fill="#505050"/><rect x="1" y="12" width="15" height="1" fill="#505050"/></svg>
<div style="left:80px;top:265px;width:5px;height:1px;background:#b0b0b0;"></div>
<div style="left:68px;top:260px;width:11px;height:11px;background:#ffffff;border:1px solid #000;box-sizing:border-box;"></div>
<div style="left:70px;top:265px;width:7px;height:1px;background:#000;"></div>
<div style="left:73px;top:262px;width:1px;height:7px;background:#000;"></div>
<svg style="left:86px;top:259px" width="16" height="13" viewBox="0 0 16 13" shape-rendering="crispEdges"><rect x="2" y="0" width="5" height="1" fill="#000000"/><rect x="1" y="1" width="1" height="1" fill="#000000"/><rect x="2" y="1" width="5" height="1" fill="#ffffff"/><rect x="7" y="1" width="1" height="1" fill="#000000"/><rect x="0" y="2" width="1" height="1" fill="#000000"/><rect x="1" y="2" width="1" height="1" fill="#ffffff"/><rect x="2" y="2" width="5" height="1" fill="#ffff66"/><rect x="7" y="2" width="8" height="1" fill="#000000"/><rect x="0" y="3" width="1" height="1" fill="#000000"/><rect x="1" y="3" width="1" height="1" fill="#ffffff"/><rect x="2" y="3" width="12" height="1" fill="#ffff66"/><rect x="14" y="3" width="1" height="1" fill="#000000"/><rect x="15" y="3" width="1" height="1" fill="#505050"/><rect x="0" y="4" width="1" height="1" fill="#000000"/><rect x="1" y="4" width="1" height="1" fill="#ffffff"/><rect x="2" y="4" width="11" height="1" fill="#ffff66"/><rect x="13" y="4" width="1" height="1" fill="#d0d050"/><rect x="14" y="4" width="1" height="1" fill="#000000"/><rect x="15" y="4" width="1" height="1" fill="#505050"/><rect x="0" y="5" width="1" height="1" fill="#000000"/><rect x="1" y="5" width="1" height="1" fill="#ffffff"/><rect x="2" y="5" width="11" height="1" fill="#ffff66"/><rect x="13" y="5" width="1" height="1" fill="#d0d050"/><rect x="14" y="5" width="1" height="1" fill="#000000"/><rect x="15" y="5" width="1" height="1" fill="#505050"/><rect x="0" y="6" width="1" height="1" fill="#000000"/><rect x="1" y="6" width="1" height="1" fill="#ffffff"/><rect x="2" y="6" width="11" height="1" fill="#ffff66"/><rect x="13" y="6" width="1" height="1" fill="#d0d050"/><rect x="14" y="6" width="1" height="1" fill="#000000"/><rect x="15" y="6" width="1" height="1" fill="#505050"/><rect x="0" y="7" width="1" height="1" fill="#000000"/><rect x="1" y="7" width="1" height="1" fill="#ffffff"/><rect x="2" y="7" width="11" height="1" fill="#ffff66"/><rect x="13" y="7" width="1" height="1" fill="#d0d050"/><rect x="14" y="7" width="1" height="1" fill="#000000"/><rect x="15" y="7" width="1" height="1" fill="#505050"/><rect x="0" y="8" width="1" height="1" fill="#000000"/><rect x="1" y="8" width="1" height="1" fill="#ffffff"/><rect x="2" y="8" width="11" height="1" fill="#ffff66"/><rect x="13" y="8" width="1" height="1" fill="#d0d050"/><rect x="14" y="8" width="1" height="1" fill="#000000"/><rect x="15" y="8" width="1" height="1" fill="#505050"/><rect x="0" y="9" width="1" height="1" fill="#000000"/><rect x="1" y="9" width="1" height="1" fill="#ffffff"/><rect x="2" y="9" width="11" height="1" fill="#ffff66"/><rect x="13" y="9" width="1" height="1" fill="#d0d050"/><rect x="14" y="9" width="1" height="1" fill="#000000"/><rect x="15" y="9" width="1" height="1" fill="#505050"/><rect x="0" y="10" width="1" height="1" fill="#000000"/><rect x="1" y="10" width="1" height="1" fill="#ffffff"/><rect x="2" y="10" width="12" height="1" fill="#d0d050"/><rect x="14" y="10" width="1" height="1" fill="#000000"/><rect x="15" y="10" width="1" height="1" fill="#505050"/><rect x="0" y="11" width="15" height="1" fill="#000000"/><rect x="15" y="11" width="1" height="1" fill="#505050"/><rect x="1" y="12" width="15" height="1" fill="#505050"/></svg>
<div style="left:75px;top:282px;width:10px;height:1px;background:#b0b0b0;"></div>
<svg style="left:88px;top:275px" width="12" height="15" viewBox="0 0 12 15" shape-rendering="crispEdges"><rect x="0" y="0" width="7" height="1" fill="#000000"/><rect x="0" y="1" width="1" height="1" fill="#000000"/><rect x="1" y="1" width="5" height="1" fill="#ffffff"/><rect x="6" y="1" width="2" height="1" fill="#000000"/><rect x="0" y="2" width="1" height="1" fill="#000000"/><rect x="1" y="2" width="1" height="1" fill="#ffffff"/><rect x="2" y="2" width="3" height="1" fill="#909090"/><rect x="5" y="2" width="1" height="1" fill="#ffffff"/><rect x="6" y="2" width="1" height="1" fill="#000000"/><rect x="7" y="2" width="1" height="1" fill="#ffffff"/><rect x="8" y="2" width="1" height="1" fill="#000000"/><rect x="0" y="3" width="1" height="1" fill="#000000"/><rect x="1" y="3" width="5" height="1" fill="#ffffff"/><rect x="6" y="3" width="1" height="1" fill="#000000"/><rect x="7" y="3" width="2" height="1" fill="#ffffff"/><rect x="9" y="3" width="1" height="1" fill="#000000"/><rect x="0" y="4" width="1" height="1" fill="#000000"/><rect x="1" y="4" width="1" height="1" fill="#ffffff"/><rect x="2" y="4" width="3" height="1" fill="#909090"/><rect x="5" y="4" width="1" height="1" fill="#ffffff"/><rect x="6" y="4" width="5" height="1" fill="#000000"/><rect x="0" y="5" width="1" height="1" fill="#000000"/><rect x="1" y="5" width="9" height="1" fill="#ffffff"/><rect x="10" y="5" width="1" height="1" fill="#000000"/><rect x="11" y="5" width="1" height="1" fill="#505050"/><rect x="0" y="6" width="1" height="1" fill="#000000"/><rect x="1" y="6" width="1" height="1" fill="#ffffff"/><rect x="2" y="6" width="7" height="1" fill="#909090"/><rect x="9" y="6" width="1" height="1" fill="#ffffff"/><rect x="10" y="6" width="1" height="1" fill="#000000"/><rect x="11" y="6" width="1" height="1" fill="#505050"/><rect x="0" y="7" width="1" height="1" fill="#000000"/><rect x="1" y="7" width="9" height="1" fill="#ffffff"/><rect x="10" y="7" width="1" height="1" fill="#000000"/><rect x="11" y="7" width="1" height="1" fill="#505050"/><rect x="0" y="8" width="1" height="1" fill="#000000"/><rect x="1" y="8" width="1" height="1" fill="#ffffff"/><rect x="2" y="8" width="7" height="1" fill="#909090"/><rect x="9" y="8" width="1" height="1" fill="#ffffff"/><rect x="10" y="8" width="1" height="1" fill="#000000"/><rect x="11" y="8" width="1" height="1" fill="#505050"/><rect x="0" y="9" width="1" height="1" fill="#000000"/><rect x="1" y="9" width="9" height="1" fill="#ffffff"/><rect x="10" y="9" width="1" height="1" fill="#000000"/><rect x="11" y="9" width="1" height="1" fill="#505050"/><rect x="0" y="10" width="1" height="1" fill="#000000"/><rect x="1" y="10" width="1" height="1" fill="#ffffff"/><rect x="2" y="10" width="7" height="1" fill="#909090"/><rect x="9" y="10" width="1" height="1" fill="#ffffff"/><rect x="10" y="10" width="1" height="1" fill="#000000"/><rect x="11" y="10" width="1" height="1" fill="#505050"/><rect x="0" y="11" width="1" height="1" fill="#000000"/><rect x="1" y="11" width="9" height="1" fill="#ffffff"/><rect x="10" y="11" width="1" height="1" fill="#000000"/><rect x="11" y="11" width="1" height="1" fill="#505050"/><rect x="0" y="12" width="1" height="1" fill="#000000"/><rect x="1" y="12" width="9" height="1" fill="#ffffff"/><rect x="10" y="12" width="1" height="1" fill="#000000"/><rect x="11" y="12" width="1" height="1" fill="#505050"/><rect x="0" y="13" width="11" height="1" fill="#000000"/><rect x="11" y="13" width="1" height="1" fill="#505050"/><rect x="1" y="14" width="11" height="1" fill="#505050"/></svg>
<div style="left:59px;top:299px;width:5px;height:1px;background:#b0b0b0;"></div>
<div style="left:47px;top:294px;width:11px;height:11px;background:#ffffff;border:1px solid #000;box-sizing:border-box;"></div>
<div style="left:49px;top:299px;width:7px;height:1px;background:#000;"></div>
<div style="left:52px;top:296px;width:1px;height:7px;background:#000;"></div>
<svg style="left:65px;top:293px" width="16" height="13" viewBox="0 0 16 13" shape-rendering="crispEdges"><rect x="2" y="0" width="5" height="1" fill="#000000"/><rect x="1" y="1" width="1" height="1" fill="#000000"/><rect x="2" y="1" width="5" height="1" fill="#ffffff"/><rect x="7" y="1" width="1" height="1" fill="#000000"/><rect x="0" y="2" width="1" height="1" fill="#000000"/><rect x="1" y="2" width="1" height="1" fill="#ffffff"/><rect x="2" y="2" width="5" height="1" fill="#ffff66"/><rect x="7" y="2" width="8" height="1" fill="#000000"/><rect x="0" y="3" width="1" height="1" fill="#000000"/><rect x="1" y="3" width="1" height="1" fill="#ffffff"/><rect x="2" y="3" width="12" height="1" fill="#ffff66"/><rect x="14" y="3" width="1" height="1" fill="#000000"/><rect x="15" y="3" width="1" height="1" fill="#505050"/><rect x="0" y="4" width="1" height="1" fill="#000000"/><rect x="1" y="4" width="1" height="1" fill="#ffffff"/><rect x="2" y="4" width="11" height="1" fill="#ffff66"/><rect x="13" y="4" width="1" height="1" fill="#d0d050"/><rect x="14" y="4" width="1" height="1" fill="#000000"/><rect x="15" y="4" width="1" height="1" fill="#505050"/><rect x="0" y="5" width="1" height="1" fill="#000000"/><rect x="1" y="5" width="1" height="1" fill="#ffffff"/><rect x="2" y="5" width="11" height="1" fill="#ffff66"/><rect x="13" y="5" width="1" height="1" fill="#d0d050"/><rect x="14" y="5" width="1" height="1" fill="#000000"/><rect x="15" y="5" width="1" height="1" fill="#505050"/><rect x="0" y="6" width="1" height="1" fill="#000000"/><rect x="1" y="6" width="1" height="1" fill="#ffffff"/><rect x="2" y="6" width="11" height="1" fill="#ffff66"/><rect x="13" y="6" width="1" height="1" fill="#d0d050"/><rect x="14" y="6" width="1" height="1" fill="#000000"/><rect x="15" y="6" width="1" height="1" fill="#505050"/><rect x="0" y="7" width="1" height="1" fill="#000000"/><rect x="1" y="7" width="1" height="1" fill="#ffffff"/><rect x="2" y="7" width="11" height="1" fill="#ffff66"/><rect x="13" y="7" width="1" height="1" fill="#d0d050"/><rect x="14" y="7" width="1" height="1" fill="#000000"/><rect x="15" y="7" width="1" height="1" fill="#505050"/><rect x="0" y="8" width="1" height="1" fill="#000000"/><rect x="1" y="8" width="1" height="1" fill="#ffffff"/><rect x="2" y="8" width="11" height="1" fill="#ffff66"/><rect x="13" y="8" width="1" height="1" fill="#d0d050"/><rect x="14" y="8" width="1" height="1" fill="#000000"/><rect x="15" y="8" width="1" height="1" fill="#505050"/><rect x="0" y="9" width="1" height="1" fill="#000000"/><rect x="1" y="9" width="1" height="1" fill="#ffffff"/><rect x="2" y="9" width="11" height="1" fill="#ffff66"/><rect x="13" y="9" width="1" height="1" fill="#d0d050"/><rect x="14" y="9" width="1" height="1" fill="#000000"/><rect x="15" y="9" width="1" height="1" fill="#505050"/><rect x="0" y="10" width="1" height="1" fill="#000000"/><rect x="1" y="10" width="1" height="1" fill="#ffffff"/><rect x="2" y="10" width="12" height="1" fill="#d0d050"/><rect x="14" y="10" width="1" height="1" fill="#000000"/><rect x="15" y="10" width="1" height="1" fill="#505050"/><rect x="0" y="11" width="15" height="1" fill="#000000"/><rect x="15" y="11" width="1" height="1" fill="#505050"/><rect x="1" y="12" width="15" height="1" fill="#505050"/></svg>
<div style="left:59px;top:316px;width:5px;height:1px;background:#b0b0b0;"></div>
<div style="left:47px;top:311px;width:11px;height:11px;background:#ffffff;border:1px solid #000;box-sizing:border-box;"></div>
<div style="left:49px;top:316px;width:7px;height:1px;background:#000;"></div>
<div style="left:52px;top:313px;width:1px;height:7px;background:#000;"></div>
<svg style="left:65px;top:310px" width="16" height="13" viewBox="0 0 16 13" shape-rendering="crispEdges"><rect x="2" y="0" width="5" height="1" fill="#000000"/><rect x="1" y="1" width="1" height="1" fill="#000000"/><rect x="2" y="1" width="5" height="1" fill="#ffffff"/><rect x="7" y="1" width="1" height="1" fill="#000000"/><rect x="0" y="2" width="1" height="1" fill="#000000"/><rect x="1" y="2" width="1" height="1" fill="#ffffff"/><rect x="2" y="2" width="5" height="1" fill="#ffff66"/><rect x="7" y="2" width="8" height="1" fill="#000000"/><rect x="0" y="3" width="1" height="1" fill="#000000"/><rect x="1" y="3" width="1" height="1" fill="#ffffff"/><rect x="2" y="3" width="12" height="1" fill="#ffff66"/><rect x="14" y="3" width="1" height="1" fill="#000000"/><rect x="15" y="3" width="1" height="1" fill="#505050"/><rect x="0" y="4" width="1" height="1" fill="#000000"/><rect x="1" y="4" width="1" height="1" fill="#ffffff"/><rect x="2" y="4" width="11" height="1" fill="#ffff66"/><rect x="13" y="4" width="1" height="1" fill="#d0d050"/><rect x="14" y="4" width="1" height="1" fill="#000000"/><rect x="15" y="4" width="1" height="1" fill="#505050"/><rect x="0" y="5" width="1" height="1" fill="#000000"/><rect x="1" y="5" width="1" height="1" fill="#ffffff"/><rect x="2" y="5" width="11" height="1" fill="#ffff66"/><rect x="13" y="5" width="1" height="1" fill="#d0d050"/><rect x="14" y="5" width="1" height="1" fill="#000000"/><rect x="15" y="5" width="1" height="1" fill="#505050"/><rect x="0" y="6" width="1" height="1" fill="#000000"/><rect x="1" y="6" width="1" height="1" fill="#ffffff"/><rect x="2" y="6" width="11" height="1" fill="#ffff66"/><rect x="13" y="6" width="1" height="1" fill="#d0d050"/><rect x="14" y="6" width="1" height="1" fill="#000000"/><rect x="15" y="6" width="1" height="1" fill="#505050"/><rect x="0" y="7" width="1" height="1" fill="#000000"/><rect x="1" y="7" width="1" height="1" fill="#ffffff"/><rect x="2" y="7" width="11" height="1" fill="#ffff66"/><rect x="13" y="7" width="1" height="1" fill="#d0d050"/><rect x="14" y="7" width="1" height="1" fill="#000000"/><rect x="15" y="7" width="1" height="1" fill="#505050"/><rect x="0" y="8" width="1" height="1" fill="#000000"/><rect x="1" y="8" width="1" height="1" fill="#ffffff"/><rect x="2" y="8" width="11" height="1" fill="#ffff66"/><rect x="13" y="8" width="1" height="1" fill="#d0d050"/><rect x="14" y="8" width="1" height="1" fill="#000000"/><rect x="15" y="8" width="1" height="1" fill="#505050"/><rect x="0" y="9" width="1" height="1" fill="#000000"/><rect x="1" y="9" width="1" height="1" fill="#ffffff"/><rect x="2" y="9" width="11" height="1" fill="#ffff66"/><rect x="13" y="9" width="1" height="1" fill="#d0d050"/><rect x="14" y="9" width="1" height="1" fill="#000000"/><rect x="15" y="9" width="1" height="1" fill="#505050"/><rect x="0" y="10" width="1" height="1" fill="#000000"/><rect x="1" y="10" width="1" height="1" fill="#ffffff"/><rect x="2" y="10" width="12" height="1" fill="#d0d050"/><rect x="14" y="10" width="1" height="1" fill="#000000"/><rect x="15" y="10" width="1" height="1" fill="#505050"/><rect x="0" y="11" width="15" height="1" fill="#000000"/><rect x="15" y="11" width="1" height="1" fill="#505050"/><rect x="1" y="12" width="15" height="1" fill="#505050"/></svg>
<div style="left:59px;top:333px;width:5px;height:1px;background:#b0b0b0;"></div>
<div style="left:47px;top:328px;width:11px;height:11px;background:#ffffff;border:1px solid #000;box-sizing:border-box;"></div>
<div style="left:49px;top:333px;width:7px;height:1px;background:#000;"></div>
<div style="left:52px;top:330px;width:1px;height:7px;background:#000;"></div>
<svg style="left:65px;top:327px" width="16" height="13" viewBox="0 0 16 13" shape-rendering="crispEdges"><rect x="2" y="0" width="5" height="1" fill="#000000"/><rect x="1" y="1" width="1" height="1" fill="#000000"/><rect x="2" y="1" width="5" height="1" fill="#ffffff"/><rect x="7" y="1" width="1" height="1" fill="#000000"/><rect x="0" y="2" width="1" height="1" fill="#000000"/><rect x="1" y="2" width="1" height="1" fill="#ffffff"/><rect x="2" y="2" width="5" height="1" fill="#ffff66"/><rect x="7" y="2" width="8" height="1" fill="#000000"/><rect x="0" y="3" width="1" height="1" fill="#000000"/><rect x="1" y="3" width="1" height="1" fill="#ffffff"/><rect x="2" y="3" width="12" height="1" fill="#ffff66"/><rect x="14" y="3" width="1" height="1" fill="#000000"/><rect x="15" y="3" width="1" height="1" fill="#505050"/><rect x="0" y="4" width="1" height="1" fill="#000000"/><rect x="1" y="4" width="1" height="1" fill="#ffffff"/><rect x="2" y="4" width="11" height="1" fill="#ffff66"/><rect x="13" y="4" width="1" height="1" fill="#d0d050"/><rect x="14" y="4" width="1" height="1" fill="#000000"/><rect x="15" y="4" width="1" height="1" fill="#505050"/><rect x="0" y="5" width="1" height="1" fill="#000000"/><rect x="1" y="5" width="1" height="1" fill="#ffffff"/><rect x="2" y="5" width="11" height="1" fill="#ffff66"/><rect x="13" y="5" width="1" height="1" fill="#d0d050"/><rect x="14" y="5" width="1" height="1" fill="#000000"/><rect x="15" y="5" width="1" height="1" fill="#505050"/><rect x="0" y="6" width="1" height="1" fill="#000000"/><rect x="1" y="6" width="1" height="1" fill="#ffffff"/><rect x="2" y="6" width="11" height="1" fill="#ffff66"/><rect x="13" y="6" width="1" height="1" fill="#d0d050"/><rect x="14" y="6" width="1" height="1" fill="#000000"/><rect x="15" y="6" width="1" height="1" fill="#505050"/><rect x="0" y="7" width="1" height="1" fill="#000000"/><rect x="1" y="7" width="1" height="1" fill="#ffffff"/><rect x="2" y="7" width="11" height="1" fill="#ffff66"/><rect x="13" y="7" width="1" height="1" fill="#d0d050"/><rect x="14" y="7" width="1" height="1" fill="#000000"/><rect x="15" y="7" width="1" height="1" fill="#505050"/><rect x="0" y="8" width="1" height="1" fill="#000000"/><rect x="1" y="8" width="1" height="1" fill="#ffffff"/><rect x="2" y="8" width="11" height="1" fill="#ffff66"/><rect x="13" y="8" width="1" height="1" fill="#d0d050"/><rect x="14" y="8" width="1" height="1" fill="#000000"/><rect x="15" y="8" width="1" height="1" fill="#505050"/><rect x="0" y="9" width="1" height="1" fill="#000000"/><rect x="1" y="9" width="1" height="1" fill="#ffffff"/><rect x="2" y="9" width="11" height="1" fill="#ffff66"/><rect x="13" y="9" width="1" height="1" fill="#d0d050"/><rect x="14" y="9" width="1" height="1" fill="#000000"/><rect x="15" y="9" width="1" height="1" fill="#505050"/><rect x="0" y="10" width="1" height="1" fill="#000000"/><rect x="1" y="10" width="1" height="1" fill="#ffffff"/><rect x="2" y="10" width="12" height="1" fill="#d0d050"/><rect x="14" y="10" width="1" height="1" fill="#000000"/><rect x="15" y="10" width="1" height="1" fill="#505050"/><rect x="0" y="11" width="15" height="1" fill="#000000"/><rect x="15" y="11" width="1" height="1" fill="#505050"/><rect x="1" y="12" width="15" height="1" fill="#505050"/></svg>
<div style="left:38px;top:350px;width:5px;height:1px;background:#b0b0b0;"></div>
<div style="left:26px;top:345px;width:11px;height:11px;background:#ffffff;border:1px solid #000;box-sizing:border-box;"></div>
<div style="left:28px;top:350px;width:7px;height:1px;background:#000;"></div>
<div style="left:31px;top:347px;width:1px;height:7px;background:#000;"></div>
<svg style="left:44px;top:344px" width="16" height="13" viewBox="0 0 16 13" shape-rendering="crispEdges"><rect x="2" y="0" width="5" height="1" fill="#000000"/><rect x="1" y="1" width="1" height="1" fill="#000000"/><rect x="2" y="1" width="5" height="1" fill="#ffffff"/><rect x="7" y="1" width="1" height="1" fill="#000000"/><rect x="0" y="2" width="1" height="1" fill="#000000"/><rect x="1" y="2" width="1" height="1" fill="#ffffff"/><rect x="2" y="2" width="5" height="1" fill="#ffff66"/><rect x="7" y="2" width="8" height="1" fill="#000000"/><rect x="0" y="3" width="1" height="1" fill="#000000"/><rect x="1" y="3" width="1" height="1" fill="#ffffff"/><rect x="2" y="3" width="12" height="1" fill="#ffff66"/><rect x="14" y="3" width="1" height="1" fill="#000000"/><rect x="15" y="3" width="1" height="1" fill="#505050"/><rect x="0" y="4" width="1" height="1" fill="#000000"/><rect x="1" y="4" width="1" height="1" fill="#ffffff"/><rect x="2" y="4" width="11" height="1" fill="#ffff66"/><rect x="13" y="4" width="1" height="1" fill="#d0d050"/><rect x="14" y="4" width="1" height="1" fill="#000000"/><rect x="15" y="4" width="1" height="1" fill="#505050"/><rect x="0" y="5" width="1" height="1" fill="#000000"/><rect x="1" y="5" width="1" height="1" fill="#ffffff"/><rect x="2" y="5" width="11" height="1" fill="#ffff66"/><rect x="13" y="5" width="1" height="1" fill="#d0d050"/><rect x="14" y="5" width="1" height="1" fill="#000000"/><rect x="15" y="5" width="1" height="1" fill="#505050"/><rect x="0" y="6" width="1" height="1" fill="#000000"/><rect x="1" y="6" width="1" height="1" fill="#ffffff"/><rect x="2" y="6" width="11" height="1" fill="#ffff66"/><rect x="13" y="6" width="1" height="1" fill="#d0d050"/><rect x="14" y="6" width="1" height="1" fill="#000000"/><rect x="15" y="6" width="1" height="1" fill="#505050"/><rect x="0" y="7" width="1" height="1" fill="#000000"/><rect x="1" y="7" width="1" height="1" fill="#ffffff"/><rect x="2" y="7" width="11" height="1" fill="#ffff66"/><rect x="13" y="7" width="1" height="1" fill="#d0d050"/><rect x="14" y="7" width="1" height="1" fill="#000000"/><rect x="15" y="7" width="1" height="1" fill="#505050"/><rect x="0" y="8" width="1" height="1" fill="#000000"/><rect x="1" y="8" width="1" height="1" fill="#ffffff"/><rect x="2" y="8" width="11" height="1" fill="#ffff66"/><rect x="13" y="8" width="1" height="1" fill="#d0d050"/><rect x="14" y="8" width="1" height="1" fill="#000000"/><rect x="15" y="8" width="1" height="1" fill="#505050"/><rect x="0" y="9" width="1" height="1" fill="#000000"/><rect x="1" y="9" width="1" height="1" fill="#ffffff"/><rect x="2" y="9" width="11" height="1" fill="#ffff66"/><rect x="13" y="9" width="1" height="1" fill="#d0d050"/><rect x="14" y="9" width="1" height="1" fill="#000000"/><rect x="15" y="9" width="1" height="1" fill="#505050"/><rect x="0" y="10" width="1" height="1" fill="#000000"/><rect x="1" y="10" width="1" height="1" fill="#ffffff"/><rect x="2" y="10" width="12" height="1" fill="#d0d050"/><rect x="14" y="10" width="1" height="1" fill="#000000"/><rect x="15" y="10" width="1" height="1" fill="#505050"/><rect x="0" y="11" width="15" height="1" fill="#000000"/><rect x="15" y="11" width="1" height="1" fill="#505050"/><rect x="1" y="12" width="15" height="1" fill="#505050"/></svg>
<div style="left:240px;top:70px;width:761px;height:1px;background:#000;"></div>
<div style="left:240px;top:70px;width:1px;height:331px;background:#000;"></div>
<div style="left:241px;top:71px;width:760px;height:16px;background:#808080;"></div>
<div style="left:241px;top:71px;width:14px;height:15px;background:#d4d0c8;"></div>
<div style="left:241px;top:71px;width:13px;height:2px;background:#ffffff;"></div>
<div style="left:241px;top:71px;width:2px;height:14px;background:#ffffff;"></div>
<div style="left:253px;top:72px;width:1px;height:13px;background:#808080;"></div>
<div style="left:242px;top:84px;width:12px;height:1px;background:#808080;"></div>
<div style="left:254px;top:71px;width:1px;height:15px;background:#404040;"></div>
<div style="left:241px;top:85px;width:14px;height:1px;background:#404040;"></div>
<svg style="left:244px;top:76px" width="8" height="5" viewBox="0 0 8 5"><path d="M0 0 H8 L4 4.5 Z" fill="#000"/></svg>
<div style="left:241px;top:87px;width:149px;height:20px;background:#e0ffff;"></div>
<div style="left:389px;top:88px;width:1px;height:19px;background:#a8c0c0;"></div>
<div style="left:241px;top:106px;width:149px;height:1px;background:#a8c0c0;"></div>
<div style="left:390px;top:87px;width:1px;height:21px;background:#000;"></div>
<div style="left:391px;top:87px;width:117px;height:20px;background:#dcdcdc;"></div>
<div style="left:391px;top:87px;width:117px;height:1px;background:#fff;"></div>
<div style="left:391px;top:87px;width:1px;height:20px;background:#fff;"></div>
<div style="left:507px;top:88px;width:1px;height:19px;background:#a0a0a0;"></div>
<div style="left:392px;top:106px;width:116px;height:1px;background:#a0a0a0;"></div>
<div style="left:508px;top:87px;width:1px;height:21px;background:#000;"></div>
<div style="left:509px;top:87px;width:117px;height:20px;background:#dcdcdc;"></div>
<div style="left:509px;top:87px;width:117px;height:1px;background:#fff;"></div>
<div style="left:509px;top:87px;width:1px;height:20px;background:#fff;"></div>
<div style="left:625px;top:88px;width:1px;height:19px;background:#a0a0a0;"></div>
<div style="left:510px;top:106px;width:116px;height:1px;background:#a0a0a0;"></div>
<div style="left:626px;top:87px;width:1px;height:21px;background:#000;"></div>
<div style="left:627px;top:87px;width:190px;height:20px;background:#dcdcdc;"></div>
<div style="left:627px;top:87px;width:190px;height:1px;background:#fff;"></div>
<div style="left:627px;top:87px;width:1px;height:20px;background:#fff;"></div>
<div style="left:816px;top:88px;width:1px;height:19px;background:#a0a0a0;"></div>
<div style="left:628px;top:106px;width:189px;height:1px;background:#a0a0a0;"></div>
<div style="left:817px;top:87px;width:1px;height:21px;background:#000;"></div>
<div style="left:818px;top:87px;width:192px;height:20px;background:#dcdcdc;"></div>
<div style="left:818px;top:87px;width:192px;height:1px;background:#fff;"></div>
<div style="left:818px;top:87px;width:1px;height:20px;background:#fff;"></div>
<div style="left:1009px;top:88px;width:1px;height:19px;background:#a0a0a0;"></div>
<div style="left:819px;top:106px;width:191px;height:1px;background:#a0a0a0;"></div>
<div style="left:1010px;top:87px;width:1px;height:21px;background:#000;"></div>
<div style="left:241px;top:107px;width:760px;height:1px;background:#000;"></div>
<div style="left:241px;top:108px;width:760px;height:17px;background:#808080;"></div>
<div style="left:241px;top:125px;width:760px;height:113px;background:#e0ffff;"></div>
<div style="left:241px;top:125px;width:1px;height:113px;background:#808080;"></div>
<div style="left:242px;top:125px;width:36px;height:36px;background:#e0ffff;"></div>
<div style="left:242px;top:125px;width:35px;height:1px;background:#fff;"></div>
<div style="left:242px;top:125px;width:1px;height:35px;background:#fff;"></div>
<div style="left:277px;top:125px;width:1px;height:36px;background:#7a9292;"></div>
<div style="left:242px;top:160px;width:36px;height:1px;background:#7a9292;"></div>
<div style="left:278px;top:125px;width:70px;height:36px;background:#e0ffff;"></div>
<div style="left:278px;top:125px;width:69px;height:1px;background:#fff;"></div>
<div style="left:278px;top:125px;width:1px;height:35px;background:#fff;"></div>
<div style="left:347px;top:125px;width:1px;height:36px;background:#7a9292;"></div>
<div style="left:278px;top:160px;width:70px;height:1px;background:#7a9292;"></div>
<div style="left:348px;top:125px;width:195px;height:36px;background:#e0ffff;"></div>
<div style="left:348px;top:125px;width:194px;height:1px;background:#fff;"></div>
<div style="left:348px;top:125px;width:1px;height:35px;background:#fff;"></div>
<div style="left:542px;top:125px;width:1px;height:36px;background:#7a9292;"></div>
<div style="left:348px;top:160px;width:195px;height:1px;background:#7a9292;"></div>
<div style="left:543px;top:125px;width:82px;height:36px;background:#e0ffff;"></div>
<div style="left:543px;top:125px;width:81px;height:1px;background:#fff;"></div>
<div style="left:543px;top:125px;width:1px;height:35px;background:#fff;"></div>
<div style="left:624px;top:125px;width:1px;height:36px;background:#7a9292;"></div>
<div style="left:543px;top:160px;width:82px;height:1px;background:#7a9292;"></div>
<div style="left:625px;top:125px;width:38px;height:36px;background:#e0ffff;"></div>
<div style="left:625px;top:125px;width:37px;height:1px;background:#fff;"></div>
<div style="left:625px;top:125px;width:1px;height:35px;background:#fff;"></div>
<div style="left:662px;top:125px;width:1px;height:36px;background:#7a9292;"></div>
<div style="left:625px;top:160px;width:38px;height:1px;background:#7a9292;"></div>
<div style="left:663px;top:125px;width:82px;height:36px;background:#e0ffff;"></div>
<div style="left:663px;top:125px;width:81px;height:1px;background:#fff;"></div>
<div style="left:663px;top:125px;width:1px;height:35px;background:#fff;"></div>
<div style="left:744px;top:125px;width:1px;height:36px;background:#7a9292;"></div>
<div style="left:663px;top:160px;width:82px;height:1px;background:#7a9292;"></div>
<div style="left:745px;top:125px;width:38px;height:36px;background:#e0ffff;"></div>
<div style="left:745px;top:125px;width:37px;height:1px;background:#fff;"></div>
<div style="left:745px;top:125px;width:1px;height:35px;background:#fff;"></div>
<div style="left:782px;top:125px;width:1px;height:36px;background:#7a9292;"></div>
<div style="left:745px;top:160px;width:38px;height:1px;background:#7a9292;"></div>
<div style="left:783px;top:125px;width:86px;height:36px;background:#e0ffff;"></div>
<div style="left:783px;top:125px;width:85px;height:1px;background:#fff;"></div>
<div style="left:783px;top:125px;width:1px;height:35px;background:#fff;"></div>
<div style="left:868px;top:125px;width:1px;height:36px;background:#7a9292;"></div>
<div style="left:783px;top:160px;width:86px;height:1px;background:#7a9292;"></div>
<div style="left:869px;top:125px;width:53px;height:36px;background:#e0ffff;"></div>
<div style="left:869px;top:125px;width:52px;height:1px;background:#fff;"></div>
<div style="left:869px;top:125px;width:1px;height:35px;background:#fff;"></div>
<div style="left:921px;top:125px;width:1px;height:36px;background:#7a9292;"></div>
<div style="left:869px;top:160px;width:53px;height:1px;background:#7a9292;"></div>
<div style="left:242px;top:161px;width:36px;height:19px;background:#ecffff;"></div>
<div style="left:242px;top:161px;width:36px;height:1px;background:#7a9292;"></div>
<div style="left:242px;top:161px;width:1px;height:19px;background:#7a9292;"></div>
<div style="left:243px;top:179px;width:35px;height:1px;background:#fff;"></div>
<div style="left:277px;top:162px;width:1px;height:18px;background:#fff;"></div>
<div style="left:278px;top:161px;width:70px;height:19px;background:#ecffff;"></div>
<div style="left:278px;top:161px;width:70px;height:1px;background:#7a9292;"></div>
<div style="left:278px;top:161px;width:1px;height:19px;background:#7a9292;"></div>
<div style="left:279px;top:179px;width:69px;height:1px;background:#fff;"></div>
<div style="left:347px;top:162px;width:1px;height:18px;background:#fff;"></div>
<div style="left:348px;top:161px;width:195px;height:19px;background:#ecffff;"></div>
<div style="left:348px;top:161px;width:195px;height:1px;background:#7a9292;"></div>
<div style="left:348px;top:161px;width:1px;height:19px;background:#7a9292;"></div>
<div style="left:349px;top:179px;width:194px;height:1px;background:#fff;"></div>
<div style="left:542px;top:162px;width:1px;height:18px;background:#fff;"></div>
<div style="left:543px;top:161px;width:82px;height:19px;background:#ecffff;"></div>
<div style="left:543px;top:161px;width:82px;height:1px;background:#7a9292;"></div>
<div style="left:543px;top:161px;width:1px;height:19px;background:#7a9292;"></div>
<div style="left:544px;top:179px;width:81px;height:1px;background:#fff;"></div>
<div style="left:624px;top:162px;width:1px;height:18px;background:#fff;"></div>
<div style="left:625px;top:161px;width:38px;height:19px;background:#ecffff;"></div>
<div style="left:625px;top:161px;width:38px;height:1px;background:#7a9292;"></div>
<div style="left:625px;top:161px;width:1px;height:19px;background:#7a9292;"></div>
<div style="left:626px;top:179px;width:37px;height:1px;background:#fff;"></div>
<div style="left:662px;top:162px;width:1px;height:18px;background:#fff;"></div>
<div style="left:663px;top:161px;width:82px;height:19px;background:#ecffff;"></div>
<div style="left:663px;top:161px;width:82px;height:1px;background:#7a9292;"></div>
<div style="left:663px;top:161px;width:1px;height:19px;background:#7a9292;"></div>
<div style="left:664px;top:179px;width:81px;height:1px;background:#fff;"></div>
<div style="left:744px;top:162px;width:1px;height:18px;background:#fff;"></div>
<div style="left:745px;top:161px;width:38px;height:19px;background:#ecffff;"></div>
<div style="left:745px;top:161px;width:38px;height:1px;background:#7a9292;"></div>
<div style="left:745px;top:161px;width:1px;height:19px;background:#7a9292;"></div>
<div style="left:746px;top:179px;width:37px;height:1px;background:#fff;"></div>
<div style="left:782px;top:162px;width:1px;height:18px;background:#fff;"></div>
<div style="left:783px;top:161px;width:86px;height:19px;background:#ecffff;"></div>
<div style="left:783px;top:161px;width:86px;height:1px;background:#7a9292;"></div>
<div style="left:783px;top:161px;width:1px;height:19px;background:#7a9292;"></div>
<div style="left:784px;top:179px;width:85px;height:1px;background:#fff;"></div>
<div style="left:868px;top:162px;width:1px;height:18px;background:#fff;"></div>
<div style="left:869px;top:161px;width:53px;height:19px;background:#ecffff;"></div>
<div style="left:869px;top:161px;width:53px;height:1px;background:#7a9292;"></div>
<div style="left:869px;top:161px;width:1px;height:19px;background:#7a9292;"></div>
<div style="left:870px;top:179px;width:52px;height:1px;background:#fff;"></div>
<div style="left:921px;top:162px;width:1px;height:18px;background:#fff;"></div>
<div style="left:242px;top:180px;width:36px;height:19px;background:#c0e0e0;"></div>
<div style="left:242px;top:180px;width:36px;height:1px;background:#7a9292;"></div>
<div style="left:242px;top:180px;width:1px;height:19px;background:#7a9292;"></div>
<div style="left:243px;top:198px;width:35px;height:1px;background:#fff;"></div>
<div style="left:277px;top:181px;width:1px;height:18px;background:#fff;"></div>
<div style="left:278px;top:180px;width:70px;height:19px;background:#c0e0e0;"></div>
<div style="left:278px;top:180px;width:70px;height:1px;background:#7a9292;"></div>
<div style="left:278px;top:180px;width:1px;height:19px;background:#7a9292;"></div>
<div style="left:279px;top:198px;width:69px;height:1px;background:#fff;"></div>
<div style="left:347px;top:181px;width:1px;height:18px;background:#fff;"></div>
<div style="left:348px;top:180px;width:195px;height:19px;background:#fffacd;"></div>
<div style="left:348px;top:180px;width:195px;height:1px;background:#9c9478;"></div>
<div style="left:348px;top:180px;width:1px;height:19px;background:#9c9478;"></div>
<div style="left:543px;top:180px;width:82px;height:19px;background:#c0e0e0;"></div>
<div style="left:543px;top:180px;width:82px;height:1px;background:#7a9292;"></div>
<div style="left:543px;top:180px;width:1px;height:19px;background:#7a9292;"></div>
<div style="left:544px;top:198px;width:81px;height:1px;background:#fff;"></div>
<div style="left:624px;top:181px;width:1px;height:18px;background:#fff;"></div>
<div style="left:625px;top:180px;width:38px;height:19px;background:#c0e0e0;"></div>
<div style="left:625px;top:180px;width:38px;height:1px;background:#7a9292;"></div>
<div style="left:625px;top:180px;width:1px;height:19px;background:#7a9292;"></div>
<div style="left:626px;top:198px;width:37px;height:1px;background:#fff;"></div>
<div style="left:662px;top:181px;width:1px;height:18px;background:#fff;"></div>
<div style="left:663px;top:180px;width:82px;height:19px;background:#c0e0e0;"></div>
<div style="left:663px;top:180px;width:82px;height:1px;background:#7a9292;"></div>
<div style="left:663px;top:180px;width:1px;height:19px;background:#7a9292;"></div>
<div style="left:664px;top:198px;width:81px;height:1px;background:#fff;"></div>
<div style="left:744px;top:181px;width:1px;height:18px;background:#fff;"></div>
<div style="left:745px;top:180px;width:38px;height:19px;background:#c0e0e0;"></div>
<div style="left:745px;top:180px;width:38px;height:1px;background:#7a9292;"></div>
<div style="left:745px;top:180px;width:1px;height:19px;background:#7a9292;"></div>
<div style="left:746px;top:198px;width:37px;height:1px;background:#fff;"></div>
<div style="left:782px;top:181px;width:1px;height:18px;background:#fff;"></div>
<div style="left:783px;top:180px;width:86px;height:19px;background:#c0e0e0;"></div>
<div style="left:783px;top:180px;width:86px;height:1px;background:#7a9292;"></div>
<div style="left:783px;top:180px;width:1px;height:19px;background:#7a9292;"></div>
<div style="left:784px;top:198px;width:85px;height:1px;background:#fff;"></div>
<div style="left:868px;top:181px;width:1px;height:18px;background:#fff;"></div>
<div style="left:869px;top:180px;width:53px;height:19px;background:#c0e0e0;"></div>
<div style="left:869px;top:180px;width:53px;height:1px;background:#7a9292;"></div>
<div style="left:869px;top:180px;width:1px;height:19px;background:#7a9292;"></div>
<div style="left:870px;top:198px;width:52px;height:1px;background:#fff;"></div>
<div style="left:921px;top:181px;width:1px;height:18px;background:#fff;"></div>
<div style="left:242px;top:199px;width:36px;height:19px;background:#ecffff;"></div>
<div style="left:242px;top:199px;width:36px;height:1px;background:#7a9292;"></div>
<div style="left:242px;top:199px;width:1px;height:19px;background:#7a9292;"></div>
<div style="left:243px;top:217px;width:35px;height:1px;background:#fff;"></div>
<div style="left:277px;top:200px;width:1px;height:18px;background:#fff;"></div>
<div style="left:278px;top:199px;width:70px;height:19px;background:#ecffff;"></div>
<div style="left:278px;top:199px;width:70px;height:1px;background:#7a9292;"></div>
<div style="left:278px;top:199px;width:1px;height:19px;background:#7a9292;"></div>
<div style="left:279px;top:217px;width:69px;height:1px;background:#fff;"></div>
<div style="left:347px;top:200px;width:1px;height:18px;background:#fff;"></div>
<div style="left:348px;top:199px;width:195px;height:19px;background:#ecffff;"></div>
<div style="left:348px;top:199px;width:195px;height:1px;background:#7a9292;"></div>
<div style="left:348px;top:199px;width:1px;height:19px;background:#7a9292;"></div>
<div style="left:349px;top:217px;width:194px;height:1px;background:#fff;"></div>
<div style="left:542px;top:200px;width:1px;height:18px;background:#fff;"></div>
<div style="left:543px;top:199px;width:82px;height:19px;background:#ecffff;"></div>
<div style="left:543px;top:199px;width:82px;height:1px;background:#7a9292;"></div>
<div style="left:543px;top:199px;width:1px;height:19px;background:#7a9292;"></div>
<div style="left:544px;top:217px;width:81px;height:1px;background:#fff;"></div>
<div style="left:624px;top:200px;width:1px;height:18px;background:#fff;"></div>
<div style="left:625px;top:199px;width:38px;height:19px;background:#ecffff;"></div>
<div style="left:625px;top:199px;width:38px;height:1px;background:#7a9292;"></div>
<div style="left:625px;top:199px;width:1px;height:19px;background:#7a9292;"></div>
<div style="left:626px;top:217px;width:37px;height:1px;background:#fff;"></div>
<div style="left:662px;top:200px;width:1px;height:18px;background:#fff;"></div>
<div style="left:663px;top:199px;width:82px;height:19px;background:#ecffff;"></div>
<div style="left:663px;top:199px;width:82px;height:1px;background:#7a9292;"></div>
<div style="left:663px;top:199px;width:1px;height:19px;background:#7a9292;"></div>
<div style="left:664px;top:217px;width:81px;height:1px;background:#fff;"></div>
<div style="left:744px;top:200px;width:1px;height:18px;background:#fff;"></div>
<div style="left:745px;top:199px;width:38px;height:19px;background:#ecffff;"></div>
<div style="left:745px;top:199px;width:38px;height:1px;background:#7a9292;"></div>
<div style="left:745px;top:199px;width:1px;height:19px;background:#7a9292;"></div>
<div style="left:746px;top:217px;width:37px;height:1px;background:#fff;"></div>
<div style="left:782px;top:200px;width:1px;height:18px;background:#fff;"></div>
<div style="left:783px;top:199px;width:86px;height:19px;background:#ecffff;"></div>
<div style="left:783px;top:199px;width:86px;height:1px;background:#7a9292;"></div>
<div style="left:783px;top:199px;width:1px;height:19px;background:#7a9292;"></div>
<div style="left:784px;top:217px;width:85px;height:1px;background:#fff;"></div>
<div style="left:868px;top:200px;width:1px;height:18px;background:#fff;"></div>
<div style="left:869px;top:199px;width:53px;height:19px;background:#ecffff;"></div>
<div style="left:869px;top:199px;width:53px;height:1px;background:#7a9292;"></div>
<div style="left:869px;top:199px;width:1px;height:19px;background:#7a9292;"></div>
<div style="left:870px;top:217px;width:52px;height:1px;background:#fff;"></div>
<div style="left:921px;top:200px;width:1px;height:18px;background:#fff;"></div>
<div style="left:242px;top:218px;width:36px;height:19px;background:#ecffff;"></div>
<div style="left:242px;top:218px;width:36px;height:1px;background:#7a9292;"></div>
<div style="left:242px;top:218px;width:1px;height:19px;background:#7a9292;"></div>
<div style="left:243px;top:236px;width:35px;height:1px;background:#fff;"></div>
<div style="left:277px;top:219px;width:1px;height:18px;background:#fff;"></div>
<div style="left:278px;top:218px;width:70px;height:19px;background:#ecffff;"></div>
<div style="left:278px;top:218px;width:70px;height:1px;background:#7a9292;"></div>
<div style="left:278px;top:218px;width:1px;height:19px;background:#7a9292;"></div>
<div style="left:279px;top:236px;width:69px;height:1px;background:#fff;"></div>
<div style="left:347px;top:219px;width:1px;height:18px;background:#fff;"></div>
<div style="left:348px;top:218px;width:195px;height:19px;background:#ecffff;"></div>
<div style="left:348px;top:218px;width:195px;height:1px;background:#7a9292;"></div>
<div style="left:348px;top:218px;width:1px;height:19px;background:#7a9292;"></div>
<div style="left:349px;top:236px;width:194px;height:1px;background:#fff;"></div>
<div style="left:542px;top:219px;width:1px;height:18px;background:#fff;"></div>
<div style="left:543px;top:218px;width:82px;height:19px;background:#ecffff;"></div>
<div style="left:543px;top:218px;width:82px;height:1px;background:#7a9292;"></div>
<div style="left:543px;top:218px;width:1px;height:19px;background:#7a9292;"></div>
<div style="left:544px;top:236px;width:81px;height:1px;background:#fff;"></div>
<div style="left:624px;top:219px;width:1px;height:18px;background:#fff;"></div>
<div style="left:625px;top:218px;width:38px;height:19px;background:#ecffff;"></div>
<div style="left:625px;top:218px;width:38px;height:1px;background:#7a9292;"></div>
<div style="left:625px;top:218px;width:1px;height:19px;background:#7a9292;"></div>
<div style="left:626px;top:236px;width:37px;height:1px;background:#fff;"></div>
<div style="left:662px;top:219px;width:1px;height:18px;background:#fff;"></div>
<div style="left:663px;top:218px;width:82px;height:19px;background:#ecffff;"></div>
<div style="left:663px;top:218px;width:82px;height:1px;background:#7a9292;"></div>
<div style="left:663px;top:218px;width:1px;height:19px;background:#7a9292;"></div>
<div style="left:664px;top:236px;width:81px;height:1px;background:#fff;"></div>
<div style="left:744px;top:219px;width:1px;height:18px;background:#fff;"></div>
<div style="left:745px;top:218px;width:38px;height:19px;background:#ecffff;"></div>
<div style="left:745px;top:218px;width:38px;height:1px;background:#7a9292;"></div>
<div style="left:745px;top:218px;width:1px;height:19px;background:#7a9292;"></div>
<div style="left:746px;top:236px;width:37px;height:1px;background:#fff;"></div>
<div style="left:782px;top:219px;width:1px;height:18px;background:#fff;"></div>
<div style="left:783px;top:218px;width:86px;height:19px;background:#ecffff;"></div>
<div style="left:783px;top:218px;width:86px;height:1px;background:#7a9292;"></div>
<div style="left:783px;top:218px;width:1px;height:19px;background:#7a9292;"></div>
<div style="left:784px;top:236px;width:85px;height:1px;background:#fff;"></div>
<div style="left:868px;top:219px;width:1px;height:18px;background:#fff;"></div>
<div style="left:869px;top:218px;width:53px;height:19px;background:#ecffff;"></div>
<div style="left:869px;top:218px;width:53px;height:1px;background:#7a9292;"></div>
<div style="left:869px;top:218px;width:1px;height:19px;background:#7a9292;"></div>
<div style="left:870px;top:236px;width:52px;height:1px;background:#fff;"></div>
<div style="left:921px;top:219px;width:1px;height:18px;background:#fff;"></div>
<div style="left:241px;top:237px;width:760px;height:1px;background:#585858;"></div>
<div style="left:240px;top:238px;width:761px;height:1px;background:#000;"></div>
<div style="left:241px;top:238px;width:1px;height:163px;background:#000;"></div>
<div style="left:242px;top:239px;width:759px;height:16px;background:#000080;"></div>
<div style="left:242px;top:239px;width:14px;height:15px;background:#d4d0c8;"></div>
<div style="left:242px;top:239px;width:13px;height:2px;background:#ffffff;"></div>
<div style="left:242px;top:239px;width:2px;height:14px;background:#ffffff;"></div>
<div style="left:254px;top:240px;width:1px;height:13px;background:#808080;"></div>
<div style="left:243px;top:252px;width:12px;height:1px;background:#808080;"></div>
<div style="left:255px;top:239px;width:1px;height:15px;background:#404040;"></div>
<div style="left:242px;top:253px;width:14px;height:1px;background:#404040;"></div>
<svg style="left:244px;top:245px" width="8" height="5" viewBox="0 0 8 5"><path d="M0 0 H8 L4 4.5 Z" fill="#000"/></svg>
<div style="left:242px;top:255px;width:125px;height:20px;background:#dcdcdc;"></div>
<div style="left:242px;top:255px;width:125px;height:1px;background:#fff;"></div>
<div style="left:242px;top:255px;width:1px;height:20px;background:#fff;"></div>
<div style="left:366px;top:256px;width:1px;height:19px;background:#a0a0a0;"></div>
<div style="left:243px;top:274px;width:124px;height:1px;background:#a0a0a0;"></div>
<div style="left:367px;top:255px;width:1px;height:21px;background:#000;"></div>
<div style="left:368px;top:255px;width:106px;height:20px;background:#dcdcdc;"></div>
<div style="left:368px;top:255px;width:106px;height:1px;background:#fff;"></div>
<div style="left:368px;top:255px;width:1px;height:20px;background:#fff;"></div>
<div style="left:473px;top:256px;width:1px;height:19px;background:#a0a0a0;"></div>
<div style="left:369px;top:274px;width:105px;height:1px;background:#a0a0a0;"></div>
<div style="left:474px;top:255px;width:1px;height:21px;background:#000;"></div>
<div style="left:475px;top:255px;width:114px;height:20px;background:#dcdcdc;"></div>
<div style="left:475px;top:255px;width:114px;height:1px;background:#fff;"></div>
<div style="left:475px;top:255px;width:1px;height:20px;background:#fff;"></div>
<div style="left:588px;top:256px;width:1px;height:19px;background:#a0a0a0;"></div>
<div style="left:476px;top:274px;width:113px;height:1px;background:#a0a0a0;"></div>
<div style="left:589px;top:255px;width:1px;height:21px;background:#000;"></div>
<div style="left:590px;top:255px;width:138px;height:20px;background:#dcdcdc;"></div>
<div style="left:590px;top:255px;width:138px;height:1px;background:#fff;"></div>
<div style="left:590px;top:255px;width:1px;height:20px;background:#fff;"></div>
<div style="left:727px;top:256px;width:1px;height:19px;background:#a0a0a0;"></div>
<div style="left:591px;top:274px;width:137px;height:1px;background:#a0a0a0;"></div>
<div style="left:728px;top:255px;width:1px;height:21px;background:#000;"></div>
<div style="left:729px;top:255px;width:174px;height:20px;background:#dcdcdc;"></div>
<div style="left:729px;top:255px;width:174px;height:1px;background:#fff;"></div>
<div style="left:729px;top:255px;width:1px;height:20px;background:#fff;"></div>
<div style="left:902px;top:256px;width:1px;height:19px;background:#a0a0a0;"></div>
<div style="left:730px;top:274px;width:173px;height:1px;background:#a0a0a0;"></div>
<div style="left:903px;top:255px;width:1px;height:21px;background:#000;"></div>
<div style="left:904px;top:255px;width:116px;height:20px;background:#dcdcdc;"></div>
<div style="left:904px;top:255px;width:116px;height:1px;background:#fff;"></div>
<div style="left:904px;top:255px;width:1px;height:20px;background:#fff;"></div>
<div style="left:1019px;top:256px;width:1px;height:19px;background:#a0a0a0;"></div>
<div style="left:905px;top:274px;width:115px;height:1px;background:#a0a0a0;"></div>
<div style="left:1020px;top:255px;width:1px;height:21px;background:#000;"></div>
<div style="left:241px;top:275px;width:760px;height:1px;background:#000;"></div>
<div style="left:241px;top:275px;width:1px;height:1px;background:#000;"></div>
<div style="left:242px;top:276px;width:759px;height:125px;background:#e0eee0;"></div>
<div style="left:242px;top:276px;width:36px;height:36px;background:#e0eee0;"></div>
<div style="left:242px;top:276px;width:35px;height:1px;background:#fff;"></div>
<div style="left:242px;top:276px;width:1px;height:35px;background:#fff;"></div>
<div style="left:277px;top:276px;width:1px;height:36px;background:#7a887a;"></div>
<div style="left:242px;top:311px;width:36px;height:1px;background:#7a887a;"></div>
<div style="left:278px;top:276px;width:77px;height:36px;background:#e0eee0;"></div>
<div style="left:278px;top:276px;width:76px;height:1px;background:#fff;"></div>
<div style="left:278px;top:276px;width:1px;height:35px;background:#fff;"></div>
<div style="left:354px;top:276px;width:1px;height:36px;background:#7a887a;"></div>
<div style="left:278px;top:311px;width:77px;height:1px;background:#7a887a;"></div>
<div style="left:355px;top:276px;width:81px;height:36px;background:#e0eee0;"></div>
<div style="left:355px;top:276px;width:80px;height:1px;background:#fff;"></div>
<div style="left:355px;top:276px;width:1px;height:35px;background:#fff;"></div>
<div style="left:435px;top:276px;width:1px;height:36px;background:#7a887a;"></div>
<div style="left:355px;top:311px;width:81px;height:1px;background:#7a887a;"></div>
<div style="left:436px;top:276px;width:153px;height:36px;background:#e0eee0;"></div>
<div style="left:436px;top:276px;width:152px;height:1px;background:#fff;"></div>
<div style="left:436px;top:276px;width:1px;height:35px;background:#fff;"></div>
<div style="left:588px;top:276px;width:1px;height:36px;background:#7a887a;"></div>
<div style="left:436px;top:311px;width:153px;height:1px;background:#7a887a;"></div>
<div style="left:589px;top:276px;width:101px;height:36px;background:#e0eee0;"></div>
<div style="left:589px;top:276px;width:100px;height:1px;background:#fff;"></div>
<div style="left:589px;top:276px;width:1px;height:35px;background:#fff;"></div>
<div style="left:689px;top:276px;width:1px;height:36px;background:#7a887a;"></div>
<div style="left:589px;top:311px;width:101px;height:1px;background:#7a887a;"></div>
<div style="left:690px;top:276px;width:85px;height:36px;background:#e0eee0;"></div>
<div style="left:690px;top:276px;width:84px;height:1px;background:#fff;"></div>
<div style="left:690px;top:276px;width:1px;height:35px;background:#fff;"></div>
<div style="left:774px;top:276px;width:1px;height:36px;background:#7a887a;"></div>
<div style="left:690px;top:311px;width:85px;height:1px;background:#7a887a;"></div>
<div style="left:775px;top:276px;width:101px;height:36px;background:#e0eee0;"></div>
<div style="left:775px;top:276px;width:100px;height:1px;background:#fff;"></div>
<div style="left:775px;top:276px;width:1px;height:35px;background:#fff;"></div>
<div style="left:875px;top:276px;width:1px;height:36px;background:#7a887a;"></div>
<div style="left:775px;top:311px;width:101px;height:1px;background:#7a887a;"></div>
<div style="left:876px;top:276px;width:85px;height:36px;background:#e0eee0;"></div>
<div style="left:876px;top:276px;width:84px;height:1px;background:#fff;"></div>
<div style="left:876px;top:276px;width:1px;height:35px;background:#fff;"></div>
<div style="left:960px;top:276px;width:1px;height:36px;background:#7a887a;"></div>
<div style="left:876px;top:311px;width:85px;height:1px;background:#7a887a;"></div>
<div style="left:961px;top:276px;width:50px;height:36px;background:#e0eee0;"></div>
<div style="left:961px;top:276px;width:49px;height:1px;background:#fff;"></div>
<div style="left:961px;top:276px;width:1px;height:35px;background:#fff;"></div>
<div style="left:1010px;top:276px;width:1px;height:36px;background:#7a887a;"></div>
<div style="left:961px;top:311px;width:50px;height:1px;background:#7a887a;"></div>
<div style="left:242px;top:312px;width:36px;height:19px;background:#c1cdc1;"></div>
<div style="left:242px;top:312px;width:36px;height:1px;background:#7a887a;"></div>
<div style="left:242px;top:312px;width:1px;height:19px;background:#7a887a;"></div>
<div style="left:243px;top:330px;width:35px;height:1px;background:#fff;"></div>
<div style="left:277px;top:313px;width:1px;height:18px;background:#fff;"></div>
<div style="left:278px;top:312px;width:77px;height:19px;background:#ffff00;"></div>
<div style="left:278px;top:312px;width:77px;height:1px;background:#8a8a3c;"></div>
<div style="left:278px;top:312px;width:1px;height:19px;background:#8a8a3c;"></div>
<div style="left:355px;top:312px;width:81px;height:19px;background:#c1cdc1;"></div>
<div style="left:355px;top:312px;width:81px;height:1px;background:#7a887a;"></div>
<div style="left:355px;top:312px;width:1px;height:19px;background:#7a887a;"></div>
<div style="left:356px;top:330px;width:80px;height:1px;background:#fff;"></div>
<div style="left:435px;top:313px;width:1px;height:18px;background:#fff;"></div>
<div style="left:436px;top:312px;width:153px;height:19px;background:#c1cdc1;"></div>
<div style="left:436px;top:312px;width:153px;height:1px;background:#7a887a;"></div>
<div style="left:436px;top:312px;width:1px;height:19px;background:#7a887a;"></div>
<div style="left:437px;top:330px;width:152px;height:1px;background:#fff;"></div>
<div style="left:588px;top:313px;width:1px;height:18px;background:#fff;"></div>
<div style="left:589px;top:312px;width:101px;height:19px;background:#c1cdc1;"></div>
<div style="left:589px;top:312px;width:101px;height:1px;background:#7a887a;"></div>
<div style="left:589px;top:312px;width:1px;height:19px;background:#7a887a;"></div>
<div style="left:590px;top:330px;width:100px;height:1px;background:#fff;"></div>
<div style="left:689px;top:313px;width:1px;height:18px;background:#fff;"></div>
<div style="left:690px;top:312px;width:85px;height:19px;background:#c1cdc1;"></div>
<div style="left:690px;top:312px;width:85px;height:1px;background:#7a887a;"></div>
<div style="left:690px;top:312px;width:1px;height:19px;background:#7a887a;"></div>
<div style="left:691px;top:330px;width:84px;height:1px;background:#fff;"></div>
<div style="left:774px;top:313px;width:1px;height:18px;background:#fff;"></div>
<div style="left:775px;top:312px;width:101px;height:19px;background:#c1cdc1;"></div>
<div style="left:775px;top:312px;width:101px;height:1px;background:#7a887a;"></div>
<div style="left:775px;top:312px;width:1px;height:19px;background:#7a887a;"></div>
<div style="left:776px;top:330px;width:100px;height:1px;background:#fff;"></div>
<div style="left:875px;top:313px;width:1px;height:18px;background:#fff;"></div>
<div style="left:876px;top:312px;width:85px;height:19px;background:#c1cdc1;"></div>
<div style="left:876px;top:312px;width:85px;height:1px;background:#7a887a;"></div>
<div style="left:876px;top:312px;width:1px;height:19px;background:#7a887a;"></div>
<div style="left:877px;top:330px;width:84px;height:1px;background:#fff;"></div>
<div style="left:960px;top:313px;width:1px;height:18px;background:#fff;"></div>
<div style="left:961px;top:312px;width:50px;height:19px;background:#c1cdc1;"></div>
<div style="left:961px;top:312px;width:50px;height:1px;background:#7a887a;"></div>
<div style="left:961px;top:312px;width:1px;height:19px;background:#7a887a;"></div>
<div style="left:962px;top:330px;width:49px;height:1px;background:#fff;"></div>
<div style="left:1010px;top:313px;width:1px;height:18px;background:#fff;"></div>
<div style="left:242px;top:331px;width:36px;height:19px;background:#e0ece0;"></div>
<div style="left:242px;top:331px;width:36px;height:1px;background:#7a887a;"></div>
<div style="left:242px;top:331px;width:1px;height:19px;background:#7a887a;"></div>
<div style="left:243px;top:349px;width:35px;height:1px;background:#fff;"></div>
<div style="left:277px;top:332px;width:1px;height:18px;background:#fff;"></div>
<div style="left:278px;top:331px;width:77px;height:19px;background:#e0ece0;"></div>
<div style="left:278px;top:331px;width:77px;height:1px;background:#7a887a;"></div>
<div style="left:278px;top:331px;width:1px;height:19px;background:#7a887a;"></div>
<div style="left:279px;top:349px;width:76px;height:1px;background:#fff;"></div>
<div style="left:354px;top:332px;width:1px;height:18px;background:#fff;"></div>
<div style="left:355px;top:331px;width:81px;height:19px;background:#e0ece0;"></div>
<div style="left:355px;top:331px;width:81px;height:1px;background:#7a887a;"></div>
<div style="left:355px;top:331px;width:1px;height:19px;background:#7a887a;"></div>
<div style="left:356px;top:349px;width:80px;height:1px;background:#fff;"></div>
<div style="left:435px;top:332px;width:1px;height:18px;background:#fff;"></div>
<div style="left:436px;top:331px;width:153px;height:19px;background:#e0ece0;"></div>
<div style="left:436px;top:331px;width:153px;height:1px;background:#7a887a;"></div>
<div style="left:436px;top:331px;width:1px;height:19px;background:#7a887a;"></div>
<div style="left:437px;top:349px;width:152px;height:1px;background:#fff;"></div>
<div style="left:588px;top:332px;width:1px;height:18px;background:#fff;"></div>
<div style="left:589px;top:331px;width:101px;height:19px;background:#e0ece0;"></div>
<div style="left:589px;top:331px;width:101px;height:1px;background:#7a887a;"></div>
<div style="left:589px;top:331px;width:1px;height:19px;background:#7a887a;"></div>
<div style="left:590px;top:349px;width:100px;height:1px;background:#fff;"></div>
<div style="left:689px;top:332px;width:1px;height:18px;background:#fff;"></div>
<div style="left:690px;top:331px;width:85px;height:19px;background:#e0ece0;"></div>
<div style="left:690px;top:331px;width:85px;height:1px;background:#7a887a;"></div>
<div style="left:690px;top:331px;width:1px;height:19px;background:#7a887a;"></div>
<div style="left:691px;top:349px;width:84px;height:1px;background:#fff;"></div>
<div style="left:774px;top:332px;width:1px;height:18px;background:#fff;"></div>
<div style="left:775px;top:331px;width:101px;height:19px;background:#e0ece0;"></div>
<div style="left:775px;top:331px;width:101px;height:1px;background:#7a887a;"></div>
<div style="left:775px;top:331px;width:1px;height:19px;background:#7a887a;"></div>
<div style="left:776px;top:349px;width:100px;height:1px;background:#fff;"></div>
<div style="left:875px;top:332px;width:1px;height:18px;background:#fff;"></div>
<div style="left:876px;top:331px;width:85px;height:19px;background:#e0ece0;"></div>
<div style="left:876px;top:331px;width:85px;height:1px;background:#7a887a;"></div>
<div style="left:876px;top:331px;width:1px;height:19px;background:#7a887a;"></div>
<div style="left:877px;top:349px;width:84px;height:1px;background:#fff;"></div>
<div style="left:960px;top:332px;width:1px;height:18px;background:#fff;"></div>
<div style="left:961px;top:331px;width:50px;height:19px;background:#e0ece0;"></div>
<div style="left:961px;top:331px;width:50px;height:1px;background:#7a887a;"></div>
<div style="left:961px;top:331px;width:1px;height:19px;background:#7a887a;"></div>
<div style="left:962px;top:349px;width:49px;height:1px;background:#fff;"></div>
<div style="left:1010px;top:332px;width:1px;height:18px;background:#fff;"></div>
<div style="left:242px;top:350px;width:36px;height:19px;background:#e0ece0;"></div>
<div style="left:242px;top:350px;width:36px;height:1px;background:#7a887a;"></div>
<div style="left:242px;top:350px;width:1px;height:19px;background:#7a887a;"></div>
<div style="left:243px;top:368px;width:35px;height:1px;background:#fff;"></div>
<div style="left:277px;top:351px;width:1px;height:18px;background:#fff;"></div>
<div style="left:278px;top:350px;width:77px;height:19px;background:#e0ece0;"></div>
<div style="left:278px;top:350px;width:77px;height:1px;background:#7a887a;"></div>
<div style="left:278px;top:350px;width:1px;height:19px;background:#7a887a;"></div>
<div style="left:279px;top:368px;width:76px;height:1px;background:#fff;"></div>
<div style="left:354px;top:351px;width:1px;height:18px;background:#fff;"></div>
<div style="left:355px;top:350px;width:81px;height:19px;background:#e0ece0;"></div>
<div style="left:355px;top:350px;width:81px;height:1px;background:#7a887a;"></div>
<div style="left:355px;top:350px;width:1px;height:19px;background:#7a887a;"></div>
<div style="left:356px;top:368px;width:80px;height:1px;background:#fff;"></div>
<div style="left:435px;top:351px;width:1px;height:18px;background:#fff;"></div>
<div style="left:436px;top:350px;width:153px;height:19px;background:#e0ece0;"></div>
<div style="left:436px;top:350px;width:153px;height:1px;background:#7a887a;"></div>
<div style="left:436px;top:350px;width:1px;height:19px;background:#7a887a;"></div>
<div style="left:437px;top:368px;width:152px;height:1px;background:#fff;"></div>
<div style="left:588px;top:351px;width:1px;height:18px;background:#fff;"></div>
<div style="left:589px;top:350px;width:101px;height:19px;background:#e0ece0;"></div>
<div style="left:589px;top:350px;width:101px;height:1px;background:#7a887a;"></div>
<div style="left:589px;top:350px;width:1px;height:19px;background:#7a887a;"></div>
<div style="left:590px;top:368px;width:100px;height:1px;background:#fff;"></div>
<div style="left:689px;top:351px;width:1px;height:18px;background:#fff;"></div>
<div style="left:690px;top:350px;width:85px;height:19px;background:#e0ece0;"></div>
<div style="left:690px;top:350px;width:85px;height:1px;background:#7a887a;"></div>
<div style="left:690px;top:350px;width:1px;height:19px;background:#7a887a;"></div>
<div style="left:691px;top:368px;width:84px;height:1px;background:#fff;"></div>
<div style="left:774px;top:351px;width:1px;height:18px;background:#fff;"></div>
<div style="left:775px;top:350px;width:101px;height:19px;background:#e0ece0;"></div>
<div style="left:775px;top:350px;width:101px;height:1px;background:#7a887a;"></div>
<div style="left:775px;top:350px;width:1px;height:19px;background:#7a887a;"></div>
<div style="left:776px;top:368px;width:100px;height:1px;background:#fff;"></div>
<div style="left:875px;top:351px;width:1px;height:18px;background:#fff;"></div>
<div style="left:876px;top:350px;width:85px;height:19px;background:#e0ece0;"></div>
<div style="left:876px;top:350px;width:85px;height:1px;background:#7a887a;"></div>
<div style="left:876px;top:350px;width:1px;height:19px;background:#7a887a;"></div>
<div style="left:877px;top:368px;width:84px;height:1px;background:#fff;"></div>
<div style="left:960px;top:351px;width:1px;height:18px;background:#fff;"></div>
<div style="left:961px;top:350px;width:50px;height:19px;background:#e0ece0;"></div>
<div style="left:961px;top:350px;width:50px;height:1px;background:#7a887a;"></div>
<div style="left:961px;top:350px;width:1px;height:19px;background:#7a887a;"></div>
<div style="left:962px;top:368px;width:49px;height:1px;background:#fff;"></div>
<div style="left:1010px;top:351px;width:1px;height:18px;background:#fff;"></div>
<div style="left:242px;top:369px;width:36px;height:19px;background:#e0ece0;"></div>
<div style="left:242px;top:369px;width:36px;height:1px;background:#7a887a;"></div>
<div style="left:242px;top:369px;width:1px;height:19px;background:#7a887a;"></div>
<div style="left:243px;top:387px;width:35px;height:1px;background:#fff;"></div>
<div style="left:277px;top:370px;width:1px;height:18px;background:#fff;"></div>
<div style="left:278px;top:369px;width:77px;height:19px;background:#e0ece0;"></div>
<div style="left:278px;top:369px;width:77px;height:1px;background:#7a887a;"></div>
<div style="left:278px;top:369px;width:1px;height:19px;background:#7a887a;"></div>
<div style="left:279px;top:387px;width:76px;height:1px;background:#fff;"></div>
<div style="left:354px;top:370px;width:1px;height:18px;background:#fff;"></div>
<div style="left:355px;top:369px;width:81px;height:19px;background:#e0ece0;"></div>
<div style="left:355px;top:369px;width:81px;height:1px;background:#7a887a;"></div>
<div style="left:355px;top:369px;width:1px;height:19px;background:#7a887a;"></div>
<div style="left:356px;top:387px;width:80px;height:1px;background:#fff;"></div>
<div style="left:435px;top:370px;width:1px;height:18px;background:#fff;"></div>
<div style="left:436px;top:369px;width:153px;height:19px;background:#e0ece0;"></div>
<div style="left:436px;top:369px;width:153px;height:1px;background:#7a887a;"></div>
<div style="left:436px;top:369px;width:1px;height:19px;background:#7a887a;"></div>
<div style="left:437px;top:387px;width:152px;height:1px;background:#fff;"></div>
<div style="left:588px;top:370px;width:1px;height:18px;background:#fff;"></div>
<div style="left:589px;top:369px;width:101px;height:19px;background:#e0ece0;"></div>
<div style="left:589px;top:369px;width:101px;height:1px;background:#7a887a;"></div>
<div style="left:589px;top:369px;width:1px;height:19px;background:#7a887a;"></div>
<div style="left:590px;top:387px;width:100px;height:1px;background:#fff;"></div>
<div style="left:689px;top:370px;width:1px;height:18px;background:#fff;"></div>
<div style="left:690px;top:369px;width:85px;height:19px;background:#e0ece0;"></div>
<div style="left:690px;top:369px;width:85px;height:1px;background:#7a887a;"></div>
<div style="left:690px;top:369px;width:1px;height:19px;background:#7a887a;"></div>
<div style="left:691px;top:387px;width:84px;height:1px;background:#fff;"></div>
<div style="left:774px;top:370px;width:1px;height:18px;background:#fff;"></div>
<div style="left:775px;top:369px;width:101px;height:19px;background:#e0ece0;"></div>
<div style="left:775px;top:369px;width:101px;height:1px;background:#7a887a;"></div>
<div style="left:775px;top:369px;width:1px;height:19px;background:#7a887a;"></div>
<div style="left:776px;top:387px;width:100px;height:1px;background:#fff;"></div>
<div style="left:875px;top:370px;width:1px;height:18px;background:#fff;"></div>
<div style="left:876px;top:369px;width:85px;height:19px;background:#e0ece0;"></div>
<div style="left:876px;top:369px;width:85px;height:1px;background:#7a887a;"></div>
<div style="left:876px;top:369px;width:1px;height:19px;background:#7a887a;"></div>
<div style="left:877px;top:387px;width:84px;height:1px;background:#fff;"></div>
<div style="left:960px;top:370px;width:1px;height:18px;background:#fff;"></div>
<div style="left:961px;top:369px;width:50px;height:19px;background:#e0ece0;"></div>
<div style="left:961px;top:369px;width:50px;height:1px;background:#7a887a;"></div>
<div style="left:961px;top:369px;width:1px;height:19px;background:#7a887a;"></div>
<div style="left:962px;top:387px;width:49px;height:1px;background:#fff;"></div>
<div style="left:1010px;top:370px;width:1px;height:18px;background:#fff;"></div>
<div style="left:353px;top:298px;width:1px;height:2px;background:#000;"></div>
<svg style="left:338px;top:325px" width="14" height="24" viewBox="0 0 14 24"><path d="M1.5 1.5 V17.6 L5.2 14 L8.3 21.2 L10.8 20.1 L7.8 13 H12.6 Z" fill="#fff" stroke="#000" stroke-width="1.2" stroke-linejoin="miter"/></svg>
<svg style="left:5px;top:5px" width="16" height="16" viewBox="0 0 16 16" shape-rendering="crispEdges"><rect x="12" y="0" width="3" height="1" fill="#00ffff"/><rect x="15" y="0" width="1" height="1" fill="#000000"/><rect x="9" y="1" width="4" height="1" fill="#000000"/><rect x="13" y="1" width="2" height="1" fill="#00ffff"/><rect x="15" y="1" width="1" height="1" fill="#000000"/><rect x="6" y="2" width="5" height="1" fill="#000000"/><rect x="11" y="2" width="1" height="1" fill="#00ffff"/><rect x="12" y="2" width="2" height="1" fill="#000000"/><rect x="14" y="2" width="1" height="1" fill="#00ffff"/><rect x="15" y="2" width="1" height="1" fill="#000000"/><rect x="6" y="3" width="4" height="1" fill="#00ffff"/><rect x="10" y="3" width="1" height="1" fill="#000000"/><rect x="11" y="3" width="1" height="1" fill="#00ffff"/><rect x="12" y="3" width="4" height="1" fill="#000000"/><rect x="1" y="4" width="10" height="1" fill="#000000"/><rect x="11" y="4" width="1" height="1" fill="#00ffff"/><rect x="12" y="4" width="1" height="1" fill="#000000"/><rect x="13" y="4" width="2" height="1" fill="#00ffff"/><rect x="15" y="4" width="1" height="1" fill="#000000"/><rect x="1" y="5" width="1" height="1" fill="#000000"/><rect x="2" y="5" width="5" height="1" fill="#00ffff"/><rect x="7" y="5" width="1" height="1" fill="#000000"/><rect x="8" y="5" width="2" height="1" fill="#00ffff"/><rect x="10" y="5" width="2" height="1" fill="#000000"/><rect x="12" y="5" width="1" height="1" fill="#00ffff"/><rect x="13" y="5" width="3" height="1" fill="#000000"/><rect x="1" y="6" width="1" height="1" fill="#000000"/><rect x="2" y="6" width="5" height="1" fill="#00ffff"/><rect x="7" y="6" width="2" height="1" fill="#000000"/><rect x="9" y="6" width="2" height="1" fill="#00ffff"/><rect x="11" y="6" width="2" height="1" fill="#000000"/><rect x="13" y="6" width="2" height="1" fill="#00ffff"/><rect x="15" y="6" width="1" height="1" fill="#000000"/><rect x="1" y="7" width="1" height="1" fill="#000000"/><rect x="2" y="7" width="5" height="1" fill="#00ffff"/><rect x="7" y="7" width="3" height="1" fill="#000000"/><rect x="10" y="7" width="2" height="1" fill="#00ffff"/><rect x="12" y="7" width="4" height="1" fill="#000000"/><rect x="1" y="8" width="1" height="1" fill="#000000"/><rect x="2" y="8" width="5" height="1" fill="#00ffff"/><rect x="7" y="8" width="2" height="1" fill="#000000"/><rect x="9" y="8" width="2" height="1" fill="#00ffff"/><rect x="11" y="8" width="2" height="1" fill="#000000"/><rect x="13" y="8" width="2" height="1" fill="#00ffff"/><rect x="15" y="8" width="1" height="1" fill="#000000"/><rect x="1" y="9" width="1" height="1" fill="#000000"/><rect x="2" y="9" width="5" height="1" fill="#00ffff"/><rect x="7" y="9" width="2" height="1" fill="#000000"/><rect x="9" y="9" width="1" height="1" fill="#00ffff"/><rect x="10" y="9" width="1" height="1" fill="#000000"/><rect x="11" y="9" width="1" height="1" fill="#00ffff"/><rect x="12" y="9" width="4" height="1" fill="#000000"/><rect x="1" y="10" width="1" height="1" fill="#000000"/><rect x="2" y="10" width="5" height="1" fill="#00ffff"/><rect x="7" y="10" width="2" height="1" fill="#000000"/><rect x="9" y="10" width="1" height="1" fill="#00ffff"/><rect x="10" y="10" width="1" height="1" fill="#000000"/><rect x="11" y="10" width="1" height="1" fill="#00ffff"/><rect x="12" y="10" width="1" height="1" fill="#000000"/><rect x="13" y="10" width="2" height="1" fill="#00ffff"/><rect x="15" y="10" width="1" height="1" fill="#000000"/><rect x="1" y="11" width="8" height="1" fill="#000000"/><rect x="9" y="11" width="2" height="1" fill="#00ffff"/><rect x="11" y="11" width="5" height="1" fill="#000000"/><rect x="6" y="12" width="4" height="1" fill="#00ffff"/><rect x="10" y="12" width="3" height="1" fill="#000000"/><rect x="13" y="12" width="2" height="1" fill="#00ffff"/><rect x="15" y="12" width="1" height="1" fill="#000000"/><rect x="6" y="13" width="2" height="1" fill="#000000"/><rect x="8" y="13" width="4" height="1" fill="#00ffff"/><rect x="12" y="13" width="4" height="1" fill="#000000"/><rect x="8" y="14" width="4" height="1" fill="#000000"/><rect x="12" y="14" width="2" height="1" fill="#00ffff"/><rect x="14" y="14" width="1" height="1" fill="#000000"/><rect x="12" y="15" width="3" height="1" fill="#000000"/></svg>
<div id="txt">
<span style="top:88.15px;font-size:14px;letter-spacing:-0.549px;left:42.30px;">Demonstration Company Inc.</span>
<span style="top:105.15px;font-size:14px;letter-spacing:-0.730px;left:63.30px;">NewViews</span>
<span style="top:122.15px;font-size:14px;letter-spacing:-0.532px;left:83.90px;">Account</span>
<span style="top:139.15px;font-size:14px;letter-spacing:-0.379px;left:104.90px;">Accounts Payable</span>
<span style="top:156.15px;font-size:14px;letter-spacing:-0.431px;left:104.30px;">Accounts Receivable</span>
<span style="top:173.15px;font-size:14px;letter-spacing:-0.641px;left:105.30px;">Bank</span>
<span style="top:190.15px;font-size:14px;letter-spacing:-0.494px;left:105.30px;">Cost of Goods Sold</span>
<span style="top:207.15px;font-size:14px;letter-spacing:-0.581px;left:105.30px;">Expense</span>
<span style="top:224.15px;font-size:14px;letter-spacing:-0.802px;left:105.30px;">General</span>
<span style="top:241.15px;font-size:14px;letter-spacing:-0.949px;left:105.30px;">Inventory</span>
<span style="top:258.15px;font-size:14px;letter-spacing:-0.508px;left:105.30px;">Sales</span>
<span style="top:275.15px;font-size:14px;letter-spacing:-0.545px;left:105.90px;">Total</span>
<span style="top:292.15px;font-size:14px;letter-spacing:-0.654px;left:83.30px;">Journal</span>
<span style="top:309.15px;font-size:14px;letter-spacing:-0.466px;left:84.30px;">Payroll</span>
<span style="top:326.15px;font-size:14px;letter-spacing:-0.806px;left:84.30px;">Report</span>
<span style="top:343.15px;font-size:14px;letter-spacing:-0.217px;left:63.30px;">System</span>
<span style="top:91.69px;font-size:11px;letter-spacing:0.393px;left:281.45px;">Accounts</span>
<span style="top:91.69px;font-size:11px;left:343.45px;">+</span>
<span style="top:91.69px;font-size:11px;letter-spacing:-0.053px;left:432.45px;">Ledger</span>
<span style="top:91.69px;font-size:11px;letter-spacing:-0.039px;left:550.45px;">History</span>
<span style="top:91.69px;font-size:11px;letter-spacing:0.018px;left:668.45px;">Default Trade/Tax Info</span>
<span style="top:91.69px;font-size:11px;letter-spacing:0.016px;left:859.45px;">Geographic Tax Codes</span>
<span style="top:164.84px;font-size:12px;left:243.40px;">8</span>
<span style="top:164.84px;font-size:12px;letter-spacing:-0.500px;left:279.40px;">MAJOR</span>
<span style="top:164.84px;font-size:12px;letter-spacing:0.283px;left:349.40px;">Major Business Schools</span>
<span style="top:164.84px;font-size:12px;letter-spacing:0.641px;left:648.40px;">13</span>
<span style="top:164.84px;font-size:12px;letter-spacing:0.242px;left:836.40px;">100.0</span>
<span style="top:183.84px;font-size:12px;left:243.40px;">9</span>
<span style="top:183.84px;font-size:12px;letter-spacing:-0.537px;left:279.40px;">MAXEDA</span>
<span style="top:183.84px;font-size:12px;letter-spacing:-0.049px;left:349.40px;">Maxeda IT Services</span>
<span style="top:183.84px;font-size:12px;letter-spacing:0.641px;left:544.40px;">no</span>
<span style="top:183.84px;font-size:12px;letter-spacing:0.214px;left:638.40px;">9.75</span>
<span style="top:183.84px;font-size:12px;letter-spacing:0.242px;left:836.40px;">100.0</span>
<span style="top:183.84px;font-size:12px;left:911.40px;">4</span>
<span style="top:202.84px;font-size:12px;letter-spacing:-0.359px;left:244.40px;">10</span>
<span style="top:202.84px;font-size:12px;letter-spacing:-0.504px;left:279.40px;">MONEY</span>
<span style="top:202.84px;font-size:12px;letter-spacing:0.072px;left:349.40px;">MoneyPenny&#x27;s Bookkeeping Serv.</span>
<span style="top:202.84px;font-size:12px;letter-spacing:0.641px;left:648.40px;">13</span>
<span style="top:202.84px;font-size:12px;letter-spacing:0.242px;left:836.40px;">100.0</span>
<span style="top:221.84px;font-size:12px;letter-spacing:-0.469px;left:244.40px;">11</span>
<span style="top:221.84px;font-size:12px;letter-spacing:-0.161px;left:279.40px;">NATIONAL</span>
<span style="top:221.84px;font-size:12px;letter-spacing:0.245px;left:349.40px;">National Housing Co-Op Assoc.</span>
<span style="top:221.84px;font-size:12px;letter-spacing:0.641px;left:648.40px;">13</span>
<span style="top:221.84px;font-size:12px;letter-spacing:0.242px;left:836.40px;">100.0</span>
<span style="top:221.84px;font-size:12px;left:911.40px;">3</span>
<span style="top:142.84px;font-size:12px;letter-spacing:1.104px;left:245.40px;">Line</span>
<span style="top:142.84px;font-size:12px;letter-spacing:1.328px;left:281.40px;">Name</span>
<span style="top:142.84px;font-size:12px;letter-spacing:0.397px;left:351.40px;">Description</span>
<span style="top:141.15px;font-size:14px;left:420.30px;">w</span>
<span style="top:142.84px;font-size:12px;letter-spacing:0.317px;left:546.40px;">Charge Tax1</span>
<span style="top:127.84px;font-size:12px;letter-spacing:0.214px;left:628.40px;">Tax1</span>
<span style="top:142.84px;font-size:12px;letter-spacing:0.214px;left:629.40px;">Rate</span>
<span style="top:142.84px;font-size:12px;letter-spacing:0.317px;left:667.40px;">Charge Tax2</span>
<span style="top:127.84px;font-size:12px;letter-spacing:0.214px;left:748.40px;">Tax2</span>
<span style="top:142.84px;font-size:12px;letter-spacing:0.214px;left:749.40px;">Rate</span>
<span style="top:142.84px;font-size:12px;letter-spacing:0.247px;left:786.40px;">Price Percent</span>
<span style="top:127.84px;font-size:12px;letter-spacing:0.164px;left:872.40px;">Price</span>
<span style="top:142.84px;font-size:12px;letter-spacing:0.219px;left:872.40px;">Objects</span>
<span style="top:259.69px;font-size:11px;letter-spacing:-0.053px;left:276.45px;">Ledger</span>
<span style="top:259.69px;font-size:11px;left:325.45px;">+</span>
<span style="top:259.69px;font-size:11px;letter-spacing:0.128px;left:403.45px;">History</span>
<span style="top:259.69px;font-size:11px;letter-spacing:0.440px;left:510.45px;">Address</span>
<span style="top:259.69px;font-size:11px;letter-spacing:0.197px;left:625.45px;">Ship Address</span>
<span style="top:259.69px;font-size:11px;letter-spacing:0.208px;left:764.45px;">Extra Addresses</span>
<span style="top:259.69px;font-size:11px;left:862.45px;">+</span>
<span style="top:259.69px;font-size:11px;letter-spacing:0.161px;left:939.45px;">Trade/Tax Info</span>
<span style="top:315.84px;font-size:12px;left:243.10px;">1</span>
<span style="top:315.84px;font-size:12px;letter-spacing:0.406px;left:280.40px;">51002</span>
<span style="top:315.84px;font-size:12px;letter-spacing:0.188px;left:356.40px;">CFEES-US</span>
<span style="top:315.84px;font-size:12px;letter-spacing:0.306px;left:437.40px;">Consulting Fees</span>
<span style="top:315.84px;font-size:12px;left:682.10px;">1</span>
<span style="top:315.84px;font-size:12px;letter-spacing:0.242px;left:737.40px;">88.00</span>
<span style="top:334.84px;font-size:12px;left:243.40px;">2</span>
<span style="top:334.84px;font-size:12px;letter-spacing:0.049px;left:279.40px;">COM1700</span>
<span style="top:334.84px;font-size:12px;letter-spacing:0.071px;left:356.40px;">MCK-780-US</span>
<span style="top:334.84px;font-size:12px;letter-spacing:0.113px;left:437.40px;">Computers - McKinley 780</span>
<span style="top:334.84px;font-size:12px;left:682.10px;">1</span>
<span style="top:334.84px;font-size:12px;letter-spacing:0.183px;left:720.40px;">2,264.00</span>
<span style="top:334.84px;font-size:12px;left:868.40px;">2</span>
<span style="top:334.84px;font-size:12px;letter-spacing:0.183px;left:906.40px;">2,248.00</span>
<span style="top:353.84px;font-size:12px;left:243.40px;">3</span>
<span style="top:353.84px;font-size:12px;letter-spacing:-0.060px;left:279.40px;">SFT2001</span>
<span style="top:353.84px;font-size:12px;letter-spacing:0.031px;left:356.40px;">MULTI-US</span>
<span style="top:353.84px;font-size:12px;letter-spacing:0.103px;left:437.40px;">Multi-File Data Base</span>
<span style="top:353.84px;font-size:12px;left:682.10px;">1</span>
<span style="top:353.84px;font-size:12px;letter-spacing:0.259px;left:730.40px;">485.00</span>
<span style="top:353.84px;font-size:12px;left:868.40px;">2</span>
<span style="top:353.84px;font-size:12px;letter-spacing:0.259px;left:916.40px;">475.00</span>
<span style="top:372.84px;font-size:12px;left:243.40px;">4</span>
<span style="top:372.84px;font-size:12px;letter-spacing:0.107px;left:279.40px;">SFT2004</span>
<span style="top:372.84px;font-size:12px;letter-spacing:0.066px;left:356.40px;">PRO-US</span>
<span style="top:372.84px;font-size:12px;letter-spacing:0.099px;left:437.40px;">Pro Accounting</span>
<span style="top:372.84px;font-size:12px;left:682.10px;">1</span>
<span style="top:372.84px;font-size:12px;letter-spacing:0.259px;left:730.40px;">780.00</span>
<span style="top:372.84px;font-size:12px;left:868.40px;">2</span>
<span style="top:372.84px;font-size:12px;letter-spacing:0.259px;left:916.40px;">775.00</span>
<span style="top:293.84px;font-size:12px;letter-spacing:1.104px;left:245.40px;">Line</span>
<span style="top:278.84px;font-size:12px;letter-spacing:0.283px;left:281.40px;">Customer</span>
<span style="top:293.84px;font-size:12px;letter-spacing:0.439px;left:281.40px;">Sales Code</span>
<span style="top:293.84px;font-size:12px;letter-spacing:1.328px;left:359.40px;">Name</span>
<span style="top:293.84px;font-size:12px;letter-spacing:0.397px;left:440.40px;">Description</span>
<span style="top:293.84px;font-size:12px;letter-spacing:0.041px;left:593.40px;">Break 1 Quantity</span>
<span style="top:293.84px;font-size:12px;letter-spacing:0.164px;left:694.40px;">Break 1 Price</span>
<span style="top:293.84px;font-size:12px;letter-spacing:0.107px;left:778.40px;">Break 2 Quantity</span>
<span style="top:293.84px;font-size:12px;letter-spacing:0.247px;left:879.40px;">Break 2 Price</span>
<span style="top:293.84px;font-size:12px;letter-spacing:0.160px;left:965.40px;">Break</span>
<span style="top:7.42px;font-size:12.5px;color:#fff;font-weight:bold;letter-spacing:-0.119px;left:23.38px;">C:/nv2.19/demobooks/demo_canada.nv2</span>
<span style="top:26.69px;font-size:11px;letter-spacing:-0.131px;left:9.45px;">Price Table Items Menu</span>
<span style="top:26.69px;font-size:11px;letter-spacing:-0.245px;left:138.45px;">File</span>
<span style="top:26.69px;font-size:11px;letter-spacing:0.010px;left:166.45px;">Edit</span>
<span style="top:26.69px;font-size:11px;letter-spacing:-0.085px;left:195.45px;">View</span>
<span style="top:26.69px;font-size:11px;letter-spacing:-0.145px;left:230.45px;">Window</span>
<span style="top:26.69px;font-size:11px;letter-spacing:0.078px;left:280.45px;">Tools</span>
<span style="top:26.69px;font-size:11px;letter-spacing:-0.379px;left:317.45px;">Bookmarks</span>
<span style="top:26.69px;font-size:11px;letter-spacing:-0.056px;left:380.45px;">Print</span>
<span style="top:26.69px;font-size:11px;letter-spacing:-0.227px;left:414.45px;">Block</span>
<span style="top:26.69px;font-size:11px;letter-spacing:0.023px;left:450.45px;">Go to</span>
<span style="top:26.69px;font-size:11px;letter-spacing:-0.208px;left:488.45px;">Help</span>
<span style="top:50.69px;font-size:11px;letter-spacing:-0.129px;left:92.45px;">Bookmarks</span>
<span style="top:50.69px;font-size:11px;left:156.45px;">+</span>
<span style="top:73.69px;font-size:11px;color:#fff;font-weight:bold;letter-spacing:-0.448px;left:5.45px;">/OBJECT</span>
<span style="top:73.69px;font-size:11px;color:#fff;font-weight:bold;letter-spacing:0.125px;left:255.45px;">/ACCOUNT/AR - Accounts, Trade/Tax Info</span>
<span style="top:111.69px;font-size:11px;color:#fff;font-weight:bold;letter-spacing:0.277px;left:242.45px;">AR Accounts.index/description_closure</span>
<span style="top:241.69px;font-size:11px;color:#fff;font-weight:bold;letter-spacing:-0.014px;left:256.45px;">/ACCOUNT/AR/1203/MAXEDA - Price Table</span>
</div>
</div></body></html>
